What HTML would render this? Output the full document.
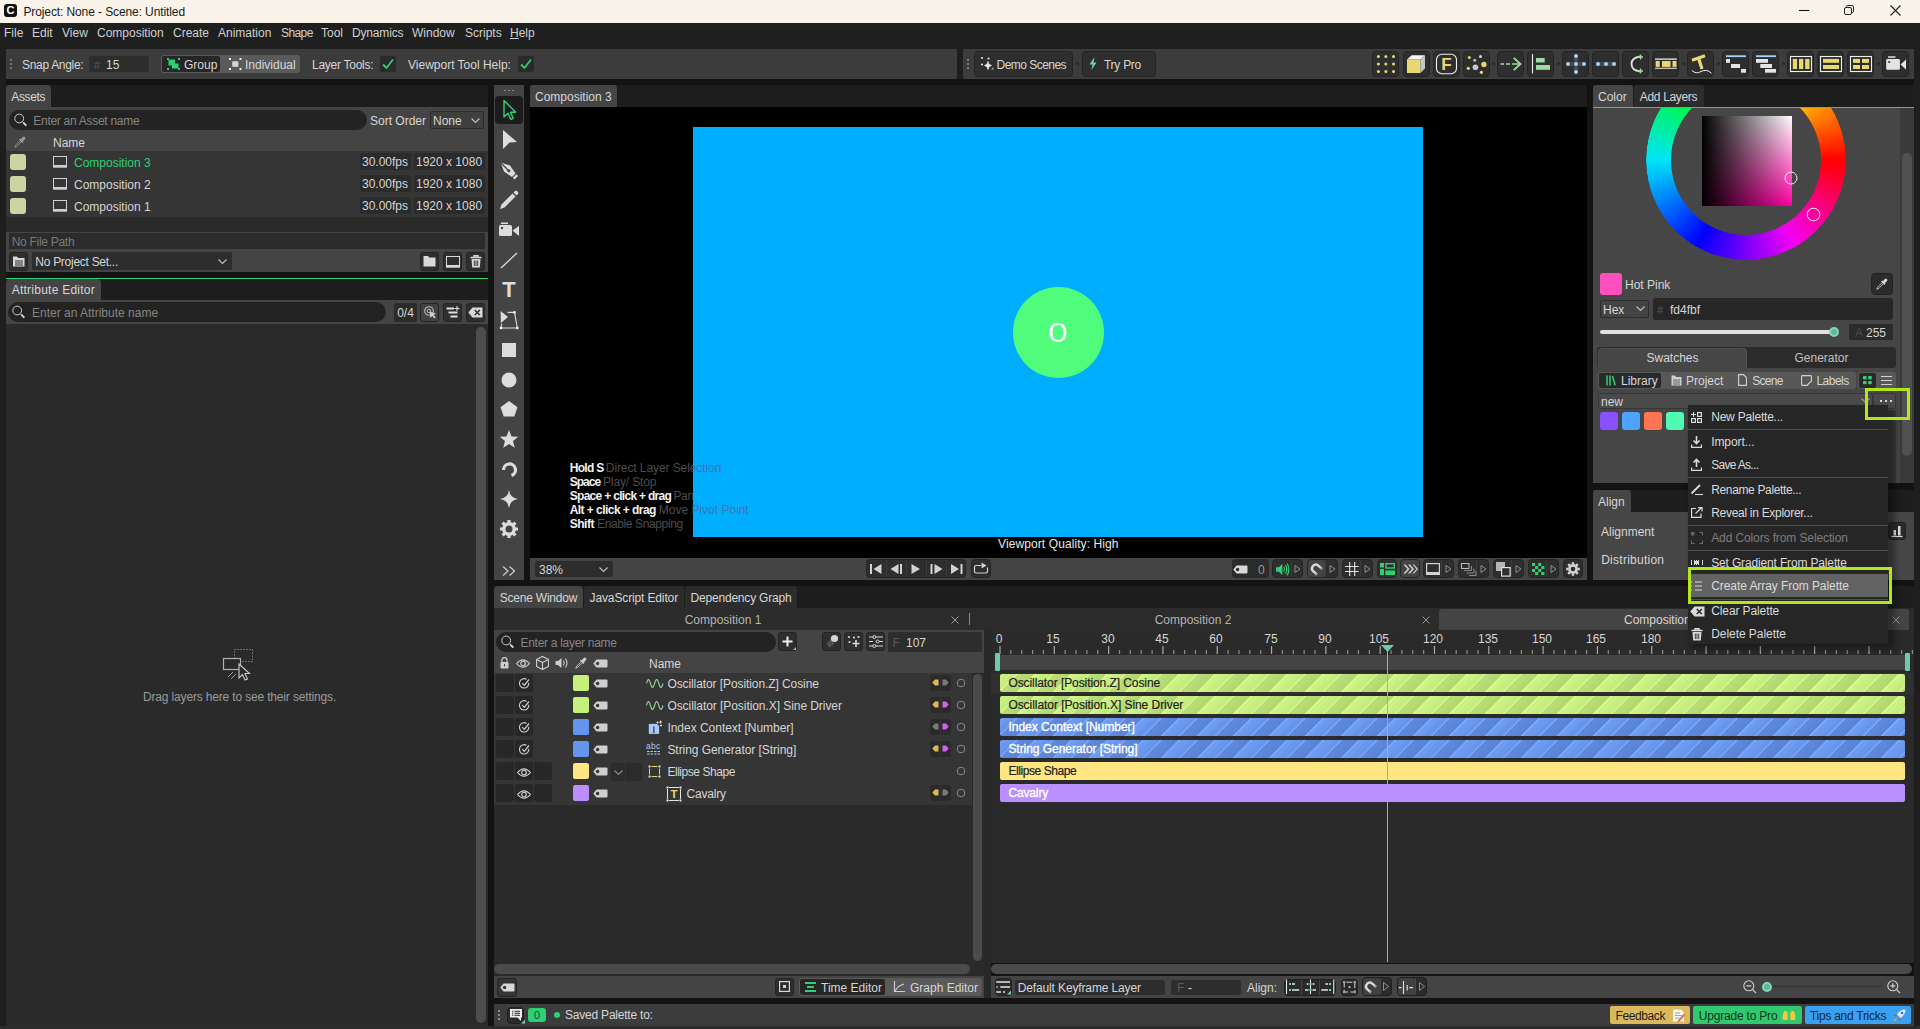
<!DOCTYPE html>
<html><head><meta charset="utf-8"><title>Project: None - Scene: Untitled</title>
<style>
html,body{margin:0;padding:0;background:#1e1e1e;}
body{width:1920px;height:1029px;overflow:hidden;font-family:"Liberation Sans",sans-serif;font-size:12px;color:#d4d4d4;}
#app{position:relative;width:1920px;height:1029px;overflow:hidden;background:#1e1e1e;}
#app div,#app svg{position:absolute;box-sizing:border-box;}
#app svg{overflow:visible;}
.t{white-space:nowrap;}
#app .t span{position:static;}

</style></head>
<body>
<div id="app">
<div style="left:0px;top:0px;width:1920px;height:23px;background:#f9f3ea;"></div>
<div style="left:4px;top:4px;width:13px;height:13px;background:#111;border-radius:3px;"></div>
<div class="t" style="left:4px;top:4px;height:13px;line-height:13px;font-size:11px;color:#ffffff;width:13px;text-align:center;font-weight:bold;">C</div>
<div class="t" style="left:23.4px;top:4px;height:17px;line-height:17px;font-size:12px;color:#1a1a1a;letter-spacing:-0.102px;">Project: None - Scene: Untitled</div>
<svg style="left:1799px;top:5px;" width="11" height="11" viewBox="0 0 11 11"><path d="M0 5.500H10.300" stroke="#1a1a1a" stroke-width="1.100"/></svg>
<svg style="left:1844px;top:5px;" width="11" height="11" viewBox="0 0 11 11"><rect x="0.5" y="2.5" width="7" height="7" rx="1.5" fill="none" stroke="#222"/><path d="M2.5 2.5V1.8Q2.5 0.5 3.8 0.5H8.2Q9.5 0.5 9.5 1.8V6.2Q9.5 7.5 8.2 7.5H7.5" fill="none" stroke="#222"/></svg>
<svg style="left:1890px;top:5px;" width="11" height="11" viewBox="0 0 11 11"><path d="M0.5 0.5L10.5 10.5M10.5 0.5L0.5 10.5" stroke="#222" stroke-width="1.1"/></svg>
<div style="left:0px;top:23px;width:1920px;height:20px;background:#1f1f1f;"></div>
<div class="t" style="left:4px;top:25px;height:16px;line-height:16px;font-size:12px;color:#cfcfcf;">File</div>
<div class="t" style="left:32px;top:25px;height:16px;line-height:16px;font-size:12px;color:#cfcfcf;">Edit</div>
<div class="t" style="left:62px;top:25px;height:16px;line-height:16px;font-size:12px;color:#cfcfcf;">View</div>
<div class="t" style="left:97px;top:25px;height:16px;line-height:16px;font-size:12px;color:#cfcfcf;">Composition</div>
<div class="t" style="left:173px;top:25px;height:16px;line-height:16px;font-size:12px;color:#cfcfcf;">Create</div>
<div class="t" style="left:218px;top:25px;height:16px;line-height:16px;font-size:12px;color:#cfcfcf;">Animation</div>
<div class="t" style="left:281px;top:25px;height:16px;line-height:16px;font-size:12px;color:#cfcfcf;letter-spacing:-0.600px;">Shape</div>
<div class="t" style="left:321px;top:25px;height:16px;line-height:16px;font-size:12px;color:#cfcfcf;">Tool</div>
<div class="t" style="left:352px;top:25px;height:16px;line-height:16px;font-size:12px;color:#cfcfcf;letter-spacing:-0.172px;">Dynamics</div>
<div class="t" style="left:412px;top:25px;height:16px;line-height:16px;font-size:12px;color:#cfcfcf;">Window</div>
<div class="t" style="left:465px;top:25px;height:16px;line-height:16px;font-size:12px;color:#cfcfcf;">Scripts</div>
<div class="t" style="left:510px;top:25px;height:16px;line-height:16px;font-size:12px;color:#cfcfcf;"><span style="text-decoration:underline">H</span>elp</div>
<div style="left:6px;top:49px;width:951px;height:30px;background:#3c3c3c;"></div>
<div style="left:10px;top:59px;width:2px;height:2px;background:#888;border-radius:1px;"></div>
<div style="left:10px;top:63px;width:2px;height:2px;background:#888;border-radius:1px;"></div>
<div style="left:10px;top:67px;width:2px;height:2px;background:#888;border-radius:1px;"></div>
<div class="t" style="left:22px;top:57px;height:16px;line-height:16px;font-size:12px;color:#d6d6d6;letter-spacing:-0.311px;">Snap Angle:</div>
<div style="left:89px;top:56px;width:60px;height:16px;background:#2d2d2d;border-radius:2px;"></div>
<div class="t" style="left:94px;top:57px;height:16px;line-height:16px;font-size:11px;color:#5c5c5c;">#</div>
<div class="t" style="left:106px;top:57px;height:16px;line-height:16px;font-size:12px;color:#d6d6d6;">15</div>
<div style="left:161px;top:55px;width:139px;height:18px;background:#5a5a5a;border-radius:3px;"></div>
<div style="left:162px;top:56px;width:58px;height:16px;background:#262626;border-radius:2px;"></div>
<div class="t" style="left:184px;top:57px;height:16px;line-height:16px;font-size:12px;color:#d6d6d6;">Group</div>
<div class="t" style="left:245px;top:57px;height:16px;line-height:16px;font-size:12px;color:#d6d6d6;">Individual</div>
<div class="t" style="left:312px;top:57px;height:16px;line-height:16px;font-size:12px;color:#d6d6d6;letter-spacing:-0.265px;">Layer Tools:</div>
<div style="left:380px;top:56px;width:16px;height:16px;background:#2a2a2a;border-radius:2px;"></div>
<svg style="left:380px;top:56px;" width="16" height="16" viewBox="0 0 16 16"><path d="M3 8.5L6.5 12L13 3.5" fill="none" stroke="#2fd072" stroke-width="1.8"/></svg>
<div class="t" style="left:408px;top:57px;height:16px;line-height:16px;font-size:12px;color:#d6d6d6;">Viewport Tool Help:</div>
<div style="left:518px;top:56px;width:16px;height:16px;background:#2a2a2a;border-radius:2px;"></div>
<svg style="left:518px;top:56px;" width="16" height="16" viewBox="0 0 16 16"><path d="M3 8.5L6.5 12L13 3.5" fill="none" stroke="#2fd072" stroke-width="1.8"/></svg>
<div style="left:963px;top:49px;width:951px;height:30px;background:#3c3c3c;"></div>
<div style="left:967px;top:59px;width:2px;height:2px;background:#888;border-radius:1px;"></div>
<div style="left:967px;top:63px;width:2px;height:2px;background:#888;border-radius:1px;"></div>
<div style="left:967px;top:67px;width:2px;height:2px;background:#888;border-radius:1px;"></div>
<div style="left:974px;top:51px;width:99px;height:26px;background:#2e2e2e;border-radius:4px;border:1px solid #242424;"></div>
<div class="t" style="left:996.6px;top:57px;height:16px;line-height:16px;font-size:12px;color:#d6d6d6;letter-spacing:-0.543px;">Demo Scenes</div>
<div style="left:1082px;top:51px;width:74px;height:26px;background:#2e2e2e;border-radius:4px;border:1px solid #242424;"></div>
<div class="t" style="left:1104px;top:57px;height:16px;line-height:16px;font-size:12px;color:#d6d6d6;letter-spacing:-0.270px;">Try Pro</div>
<div style="left:1372px;top:51px;width:27px;height:26px;background:#2e2e2e;border-radius:4px;border:1px solid #242424;"></div>
<div style="left:1403px;top:51px;width:27px;height:26px;background:#2e2e2e;border-radius:4px;border:1px solid #242424;"></div>
<div style="left:1433px;top:51px;width:27px;height:26px;background:#2e2e2e;border-radius:4px;border:1px solid #242424;"></div>
<div style="left:1463px;top:51px;width:27px;height:26px;background:#2e2e2e;border-radius:4px;border:1px solid #242424;"></div>
<div style="left:1497px;top:51px;width:27px;height:26px;background:#2e2e2e;border-radius:4px;border:1px solid #242424;"></div>
<div style="left:1527px;top:51px;width:27px;height:26px;background:#2e2e2e;border-radius:4px;border:1px solid #242424;"></div>
<div style="left:1562px;top:51px;width:27px;height:26px;background:#2e2e2e;border-radius:4px;border:1px solid #242424;"></div>
<div style="left:1592px;top:51px;width:27px;height:26px;background:#2e2e2e;border-radius:4px;border:1px solid #242424;"></div>
<div style="left:1622px;top:51px;width:27px;height:26px;background:#2e2e2e;border-radius:4px;border:1px solid #242424;"></div>
<div style="left:1652px;top:51px;width:27px;height:26px;background:#2e2e2e;border-radius:4px;border:1px solid #242424;"></div>
<div style="left:1687px;top:51px;width:27px;height:26px;background:#2e2e2e;border-radius:4px;border:1px solid #242424;"></div>
<div style="left:1722px;top:51px;width:27px;height:26px;background:#2e2e2e;border-radius:4px;border:1px solid #242424;"></div>
<div style="left:1752px;top:51px;width:27px;height:26px;background:#2e2e2e;border-radius:4px;border:1px solid #242424;"></div>
<div style="left:1787px;top:51px;width:27px;height:26px;background:#2e2e2e;border-radius:4px;border:1px solid #242424;"></div>
<div style="left:1817px;top:51px;width:27px;height:26px;background:#2e2e2e;border-radius:4px;border:1px solid #242424;"></div>
<div style="left:1847px;top:51px;width:27px;height:26px;background:#2e2e2e;border-radius:4px;border:1px solid #242424;"></div>
<div style="left:1882px;top:51px;width:27px;height:26px;background:#2e2e2e;border-radius:4px;border:1px solid #242424;"></div>
<div style="left:1492px;top:62px;width:3px;height:3px;background:#2a2a2a;border-radius:2px;"></div>
<div style="left:1557px;top:62px;width:3px;height:3px;background:#2a2a2a;border-radius:2px;"></div>
<div style="left:1682px;top:62px;width:3px;height:3px;background:#2a2a2a;border-radius:2px;"></div>
<div style="left:1717px;top:62px;width:3px;height:3px;background:#2a2a2a;border-radius:2px;"></div>
<div style="left:1782px;top:62px;width:3px;height:3px;background:#2a2a2a;border-radius:2px;"></div>
<div style="left:1877px;top:62px;width:3px;height:3px;background:#2a2a2a;border-radius:2px;"></div>
<div style="left:1076px;top:62px;width:3px;height:3px;background:#2a2a2a;border-radius:2px;"></div>
<div style="left:6px;top:79px;width:1908px;height:947px;background:#131313;"></div>
<div style="left:6px;top:85px;width:482px;height:22px;background:#1d1d1d;"></div>
<div style="left:6px;top:279px;width:482px;height:21px;background:#1d1d1d;"></div>
<div style="left:530px;top:85px;width:1057px;height:22px;background:#1d1d1d;"></div>
<div style="left:1593px;top:85px;width:321px;height:22px;background:#1d1d1d;"></div>
<div style="left:1593px;top:490px;width:321px;height:22px;background:#1d1d1d;"></div>
<div style="left:494px;top:586px;width:1420px;height:22px;background:#1d1d1d;"></div>
<div style="left:6px;top:85px;width:45px;height:22px;background:#444444;border-radius:4px 4px 0 0;"></div>
<div class="t" style="left:11.3px;top:89px;height:16px;line-height:16px;font-size:12px;color:#d6d6d6;letter-spacing:-0.385px;">Assets</div>
<div style="left:6px;top:107px;width:482px;height:165px;background:#444444;"></div>
<div style="left:9px;top:110px;width:358px;height:20px;background:#232323;border-radius:10px;"></div>
<svg style="left:14px;top:113px;" width="14" height="14" viewBox="0 0 14 14"><circle cx="5.200" cy="5.500" r="4.400" fill="none" stroke="#cfcfcf" stroke-width="1"/><path d="M8.500 8.800L10 10.300" stroke="#cfcfcf" stroke-width="1"/><path d="M10 10.300L11.800 12.100" stroke="#cfcfcf" stroke-width="2" stroke-linecap="round"/></svg>
<div class="t" style="left:33.3px;top:113px;height:16px;line-height:16px;font-size:12px;color:#858585;letter-spacing:-0.284px;">Enter an Asset name</div>
<div class="t" style="left:370px;top:113px;height:16px;line-height:16px;font-size:12px;color:#d6d6d6;">Sort Order</div>
<div style="left:430px;top:111px;width:54px;height:18px;background:#3f3f3f;border-radius:2px;border:1px solid #2c2c2c;"></div>
<div class="t" style="left:433px;top:113px;height:16px;line-height:16px;font-size:12px;color:#d6d6d6;">None</div>
<svg style="left:471px;top:118px;" width="9" height="6" viewBox="0 0 9 6"><path d="M0.5 0.5L4.5 4.5L8.5 0.5" fill="none" stroke="#bdbdbd" stroke-width="1.2"/></svg>
<svg style="left:14px;top:136px;" width="12" height="12" viewBox="0 0 12 12"><path d="M0.800 11.200L1.600 9.200L6.600 4.200L7.800 5.400L2.800 10.400Z" fill="none" stroke="#9a9a9a" stroke-width="0.900"/><path d="M5.600 3L9 6.400" stroke="#9a9a9a" stroke-width="1.700"/><path d="M7.800 4.200L9.900 2.100" stroke="#9a9a9a" stroke-width="3" stroke-linecap="round"/></svg>
<div class="t" style="left:53px;top:135px;height:16px;line-height:16px;font-size:12px;color:#d6d6d6;">Name</div>
<div style="left:6px;top:151px;width:482px;height:66px;background:#353535;"></div>
<div style="left:10px;top:154px;width:16px;height:16px;background:#ccd4a4;border-radius:3px;"></div>
<svg style="left:53px;top:156px;" width="14" height="12" viewBox="0 0 14 12"><rect x="0.5" y="0.5" width="13" height="9" fill="none" stroke="#d0d0d0" stroke-width="1"/><rect x="0" y="9.5" width="14" height="2.2" fill="#d0d0d0"/></svg>
<div class="t" style="left:74px;top:155px;height:16px;line-height:16px;font-size:12px;color:#2fd072;">Composition 3</div>
<div style="left:360px;top:153px;width:51px;height:17px;background:#2b2b2b;border-radius:2px;"></div>
<div class="t" style="left:362px;top:154px;height:16px;line-height:16px;font-size:12px;color:#d6d6d6;">30.00fps</div>
<div style="left:414px;top:153px;width:71px;height:17px;background:#2b2b2b;border-radius:2px;"></div>
<div class="t" style="left:416px;top:154px;height:16px;line-height:16px;font-size:12px;color:#d6d6d6;">1920 x 1080</div>
<div style="left:10px;top:176px;width:16px;height:16px;background:#ccd4a4;border-radius:3px;"></div>
<svg style="left:53px;top:178px;" width="14" height="12" viewBox="0 0 14 12"><rect x="0.5" y="0.5" width="13" height="9" fill="none" stroke="#d0d0d0" stroke-width="1"/><rect x="0" y="9.5" width="14" height="2.2" fill="#d0d0d0"/></svg>
<div class="t" style="left:74px;top:177px;height:16px;line-height:16px;font-size:12px;color:#d6d6d6;">Composition 2</div>
<div style="left:360px;top:175px;width:51px;height:17px;background:#2b2b2b;border-radius:2px;"></div>
<div class="t" style="left:362px;top:176px;height:16px;line-height:16px;font-size:12px;color:#d6d6d6;">30.00fps</div>
<div style="left:414px;top:175px;width:71px;height:17px;background:#2b2b2b;border-radius:2px;"></div>
<div class="t" style="left:416px;top:176px;height:16px;line-height:16px;font-size:12px;color:#d6d6d6;">1920 x 1080</div>
<div style="left:10px;top:198px;width:16px;height:16px;background:#ccd4a4;border-radius:3px;"></div>
<svg style="left:53px;top:200px;" width="14" height="12" viewBox="0 0 14 12"><rect x="0.5" y="0.5" width="13" height="9" fill="none" stroke="#d0d0d0" stroke-width="1"/><rect x="0" y="9.5" width="14" height="2.2" fill="#d0d0d0"/></svg>
<div class="t" style="left:74px;top:199px;height:16px;line-height:16px;font-size:12px;color:#d6d6d6;">Composition 1</div>
<div style="left:360px;top:197px;width:51px;height:17px;background:#2b2b2b;border-radius:2px;"></div>
<div class="t" style="left:362px;top:198px;height:16px;line-height:16px;font-size:12px;color:#d6d6d6;">30.00fps</div>
<div style="left:414px;top:197px;width:71px;height:17px;background:#2b2b2b;border-radius:2px;"></div>
<div class="t" style="left:416px;top:198px;height:16px;line-height:16px;font-size:12px;color:#d6d6d6;">1920 x 1080</div>
<div style="left:6px;top:217px;width:482px;height:15px;background:#2a2a2a;"></div>
<div style="left:9px;top:233px;width:476px;height:16px;background:#2b2b2b;"></div>
<div class="t" style="left:11.7px;top:234px;height:16px;line-height:16px;font-size:12px;color:#7a7a7a;letter-spacing:-0.286px;">No File Path</div>
<div style="left:9px;top:252px;width:19px;height:19px;background:#2e2e2e;border-radius:3px;border:1px solid #242424;"></div>
<svg style="left:12px;top:255px;" width="14" height="13" viewBox="0 0 14 13"><path d="M1 1.5H5L6 3H12.5V11.5H1Z" fill="#d8d8d8"/><path d="M3 6H11M3 8H11M3 10H11" stroke="#2e2e2e" stroke-width="1"/></svg>
<div style="left:32px;top:252px;width:200px;height:18px;background:#2d2d2d;border-radius:2px;"></div>
<div class="t" style="left:35.3px;top:254px;height:16px;line-height:16px;font-size:12px;color:#d6d6d6;letter-spacing:-0.275px;">No Project Set...</div>
<svg style="left:218px;top:259px;" width="9" height="6" viewBox="0 0 9 6"><path d="M0.5 0.5L4.5 4.5L8.5 0.5" fill="none" stroke="#bdbdbd" stroke-width="1.2"/></svg>
<div style="left:420px;top:252px;width:19px;height:19px;background:#2e2e2e;border-radius:3px;border:1px solid #242424;"></div>
<svg style="left:423px;top:255px;" width="13" height="12" viewBox="0 0 13 12"><path d="M0.5 1H5L6.2 2.5H12.5V11.5H0.5Z" fill="#d8d8d8"/></svg>
<div style="left:443px;top:252px;width:19px;height:19px;background:#2e2e2e;border-radius:3px;border:1px solid #242424;"></div>
<svg style="left:446px;top:256px;" width="14" height="12" viewBox="0 0 14 12"><rect x="0.5" y="0.5" width="13" height="9" fill="none" stroke="#d8d8d8" stroke-width="1"/><rect x="0" y="9.5" width="14" height="2.2" fill="#d8d8d8"/></svg>
<div style="left:466px;top:252px;width:19px;height:19px;background:#2e2e2e;border-radius:3px;border:1px solid #242424;"></div>
<svg style="left:470px;top:255px;" width="12" height="13" viewBox="0 0 12 13"><path d="M0.5 2.5H11.5M4 2V0.7H8V2" stroke="#d8d8d8" stroke-width="1.4" fill="none"/><path d="M1.5 4H10.5L9.8 12.5H2.2Z" fill="#d8d8d8"/><path d="M4.3 5.5V11M6 5.5V11M7.7 5.5V11" stroke="#2e2e2e" stroke-width="0.9"/></svg>
<div style="left:6px;top:278px;width:482px;height:1px;background:#2fd072;"></div>
<div style="left:6px;top:279px;width:95px;height:21px;background:#444444;border-radius:4px 4px 0 0;"></div>
<div class="t" style="left:11.7px;top:282px;height:16px;line-height:16px;font-size:12px;color:#d6d6d6;letter-spacing:0.245px;">Attribute Editor</div>
<div style="left:6px;top:300px;width:482px;height:24px;background:#444444;"></div>
<div style="left:8px;top:302px;width:378px;height:20px;background:#232323;border-radius:10px;"></div>
<svg style="left:12px;top:305px;" width="14" height="14" viewBox="0 0 14 14"><circle cx="5.200" cy="5.500" r="4.400" fill="none" stroke="#cfcfcf" stroke-width="1"/><path d="M8.500 8.800L10 10.300" stroke="#cfcfcf" stroke-width="1"/><path d="M10 10.300L11.800 12.100" stroke="#cfcfcf" stroke-width="2" stroke-linecap="round"/></svg>
<div class="t" style="left:32px;top:305px;height:16px;line-height:16px;font-size:12px;color:#858585;">Enter an Attribute name</div>
<div style="left:394px;top:303px;width:23px;height:19px;background:#2b2b2b;border-radius:2px;"></div>
<div class="t" style="left:394px;top:305px;height:16px;line-height:16px;font-size:12px;color:#d6d6d6;width:23px;text-align:center;">0/4</div>
<div style="left:420px;top:303px;width:19px;height:19px;background:#424242;border-radius:3px;border:1px solid #242424;"></div>
<div style="left:443px;top:303px;width:19px;height:19px;background:#2e2e2e;border-radius:3px;border:1px solid #242424;"></div>
<div style="left:466px;top:303px;width:19px;height:19px;background:#2e2e2e;border-radius:3px;border:1px solid #242424;"></div>
<svg style="left:424px;top:306px;" width="13" height="13" viewBox="0 0 13 13"><circle cx="5" cy="5" r="4.300" fill="none" stroke="#b8b8b8" stroke-width="1.100"/><circle cx="5" cy="5" r="1.800" fill="none" stroke="#b8b8b8" stroke-width="1"/><path d="M5.500 5.500L6.500 12L8.300 10L10.500 12.500L11.800 11.300L9.600 9L12 7.500Z" fill="#d0d0d0"/></svg>
<svg style="left:446px;top:306px;" width="14" height="12" viewBox="0 0 14 12"><path d="M0.500 2.500H8M2.500 6.500H11.500M4.500 10.500H11.500" stroke="#e0e0e0" stroke-width="1.800"/><path d="M11 0V5M8.500 2.500H13.500" stroke="#e0e0e0" stroke-width="1.100"/></svg>
<svg style="left:468px;top:307px;" width="15" height="11" viewBox="0 0 15 11"><path d="M0.3 5.5L4.5 0.5H14.5V10.5H4.5Z" fill="#d8d8d8"/><path d="M6.8 3L11.8 8M11.8 3L6.8 8" stroke="#2e2e2e" stroke-width="1.5"/></svg>
<div style="left:6px;top:324px;width:482px;height:702px;background:#2a2a2a;"></div>
<div style="left:476px;top:327px;width:10px;height:696px;background:#4d4d4d;border-radius:5px;"></div>
<div class="t" style="left:143px;top:689px;height:16px;line-height:16px;font-size:12px;color:#9a9a9a;letter-spacing:-0.162px;">Drag layers here to see their settings.</div>
<svg style="left:222px;top:648px;" width="32" height="34" viewBox="0 0 32 34"><rect x="12.5" y="1.5" width="18" height="12" fill="none" stroke="#9a9a9a" stroke-dasharray="1.2 1.8"/><rect x="1.5" y="10.5" width="17" height="11" fill="#2a2a2a" stroke="#b0b0b0" stroke-width="1.2"/><path d="M17 16L17 30L20.5 26.5L23 32L25.5 31L23 25.5L27.5 25.5Z" fill="#2a2a2a" stroke="#c8c8c8" stroke-width="1.1"/><path d="M6 29L11 24M9 31L14 26" stroke="#9a9a9a" stroke-width="1"/></svg>
<div style="left:494px;top:85px;width:30px;height:495px;background:#444444;"></div>
<div style="left:504px;top:90px;width:2px;height:1px;background:#8a8a8a;"></div>
<div style="left:508px;top:90px;width:2px;height:1px;background:#8a8a8a;"></div>
<div style="left:512px;top:90px;width:2px;height:1px;background:#8a8a8a;"></div>
<div style="left:495px;top:96px;width:28px;height:28px;background:#1c1c1c;border-radius:4px;"></div>
<svg style="left:497px;top:98px;" width="24" height="24" viewBox="0 0 24 24"><path d="M7 2.5L7 19L11 15.2L13.8 21.5L16.2 20.4L13.5 14.3L18.8 14.3Z" fill="none" stroke="#2fd072" stroke-width="1.4" stroke-linejoin="round"/></svg>
<svg style="left:497px;top:128px;" width="24" height="24" viewBox="0 0 24 24"><path d="M6 2L20 14L12.5 14.5L6 21Z" fill="#dcdcdc"/></svg>
<svg style="left:497px;top:158px;" width="24" height="24" viewBox="0 0 24 24"><path d="M3.5 4.5L13 7.5L18.5 15.5L15 19L7 13.5Z" fill="#dcdcdc"/><path d="M3.5 4.5L11.5 12.5" stroke="#444" stroke-width="1.2"/><circle cx="11.8" cy="12.8" r="1.5" fill="#444"/><path d="M15.8 19.8L19.3 16.3L21 18L17.5 21.5Z" fill="#dcdcdc"/></svg>
<svg style="left:497px;top:188px;" width="24" height="24" viewBox="0 0 24 24"><path d="M3 21L4.5 16.5L15.5 5.5L18.5 8.5L7.5 19.5Z" fill="#dcdcdc"/><path d="M16.5 4.5L18 3Q19 2.2 20 3L21 4Q21.8 5 21 6L19.5 7.5Z" fill="#dcdcdc"/></svg>
<svg style="left:497px;top:216.5px;" width="24" height="24" viewBox="0 0 24 24"><rect x="2" y="8" width="13" height="11" rx="1.500" fill="#dcdcdc"/><path d="M15.500 13.500L22 9V19Z" fill="#dcdcdc"/><rect x="4" y="5.500" width="7" height="1.600" fill="#dcdcdc"/><circle cx="5" cy="11" r="1.200" fill="#444"/></svg>
<svg style="left:497px;top:248px;" width="24" height="24" viewBox="0 0 24 24"><path d="M4 20L20 5" stroke="#dcdcdc" stroke-width="1.3"/></svg>
<div class="t" style="left:497px;top:278px;height:24px;line-height:24px;font-size:22px;color:#dcdcdc;width:24px;text-align:center;font-weight:bold;">T</div>
<svg style="left:497px;top:308px;" width="24" height="24" viewBox="0 0 24 24"><path d="M3.600 2.900L11 9L3.900 14.900Z" fill="#dcdcdc"/><path d="M10.500 4.400H17.500L20.300 20H4L4.800 15.500" fill="none" stroke="#dcdcdc" stroke-width="1.100"/><rect x="16.300" y="3.200" width="2.400" height="2.400" fill="#f0f0f0"/><rect x="19.100" y="18.800" width="2.400" height="2.400" fill="#f0f0f0"/><rect x="2.800" y="18.800" width="2.400" height="2.400" fill="#f0f0f0"/></svg>
<svg style="left:497px;top:338px;" width="24" height="24" viewBox="0 0 24 24"><rect x="5" y="5" width="14" height="14" fill="#dcdcdc"/></svg>
<svg style="left:497px;top:368px;" width="24" height="24" viewBox="0 0 24 24"><circle cx="12" cy="12" r="7.5" fill="#dcdcdc"/></svg>
<svg style="left:497px;top:397px;" width="24" height="24" viewBox="0 0 24 24"><path d="M12 4L20.5 10.2L17.3 19.5H6.7L3.500 10.2Z" fill="#dcdcdc"/></svg>
<svg style="left:497px;top:427px;" width="24" height="24" viewBox="0 0 24 24"><path d="M12 3L14.5 9.4L21.3 9.8L16 14.1L17.8 20.7L12 17L6.200 20.7L8 14.1L2.700 9.800L9.500 9.400Z" fill="#dcdcdc"/></svg>
<svg style="left:497px;top:457px;" width="24" height="24" viewBox="0 0 24 24"><path d="M6.5 13A6 6 0 1 1 14.5 18.6" fill="none" stroke="#dcdcdc" stroke-width="3.2"/></svg>
<svg style="left:497px;top:487px;" width="24" height="24" viewBox="0 0 24 24"><path d="M12 3Q13 11 21 12Q13 13 12 21Q11 13 3 12Q11 11 12 3Z" fill="#dcdcdc"/></svg>
<svg style="left:497px;top:517px;" width="24" height="24" viewBox="0 0 24 24"><circle cx="12" cy="12" r="5.2" fill="none" stroke="#dcdcdc" stroke-width="3.4"/><g stroke="#dcdcdc" stroke-width="3.2"><path d="M12 3V6M12 18V21M3 12H6M18 12H21M5.6 5.6L7.8 7.8M16.2 16.2L18.4 18.4M5.6 18.4L7.8 16.2M16.2 7.8L18.4 5.6"/></g></svg>
<svg style="left:502px;top:565px;" width="14" height="12" viewBox="0 0 14 12"><path d="M1 1.5L6 6L1 10.5M7.5 1.500L12.5 6L7.5 10.5" fill="none" stroke="#c8c8c8" stroke-width="1.3"/></svg>
<div style="left:530px;top:85px;width:87px;height:22px;background:#444444;border-radius:3px 3px 0 0;"></div>
<div class="t" style="left:535px;top:89px;height:16px;line-height:16px;font-size:12px;color:#d6d6d6;">Composition 3</div>
<div style="left:530px;top:107px;width:1057px;height:451px;background:#000;"></div>
<div style="left:693px;top:127px;width:730px;height:410px;background:#00aeff;"></div>
<div style="left:1012.5px;top:286.5px;width:91px;height:91px;background:#50fc7b;border-radius:46px;"></div>
<div class="t" style="left:1013px;top:318px;height:30px;line-height:30px;font-size:27px;color:#fff;width:90px;text-align:center;transform:scaleX(1.32);transform-origin:50% 50%;">0</div>
<div style="left:530px;top:440px;width:163px;height:100px;overflow:hidden;"><div style="left:-530px;top:-440px;width:1920px;height:1029px;">
<div class="t" style="left:569.7px;top:460px;height:16px;line-height:16px;font-size:12px;color:#f2f2f2;letter-spacing:-0.700px;font-weight:bold;">Hold S</div>
<div class="t" style="left:605.8px;top:460px;height:16px;line-height:16px;font-size:12px;color:#4c4c4c;letter-spacing:-0.086px;">Direct Layer Selection</div>
<div class="t" style="left:569.7px;top:474px;height:16px;line-height:16px;font-size:12px;color:#f2f2f2;letter-spacing:-0.971px;font-weight:bold;">Space</div>
<div class="t" style="left:603px;top:474px;height:16px;line-height:16px;font-size:12px;color:#4c4c4c;letter-spacing:-0.140px;">Play/ Stop</div>
<div class="t" style="left:569.7px;top:488px;height:16px;line-height:16px;font-size:12px;color:#f2f2f2;letter-spacing:-0.695px;font-weight:bold;">Space + click + drag</div>
<div class="t" style="left:673.4px;top:488px;height:16px;line-height:16px;font-size:12px;color:#4c4c4c;letter-spacing:-0.317px;">Pan</div>
<div class="t" style="left:569.7px;top:502px;height:16px;line-height:16px;font-size:12px;color:#f2f2f2;letter-spacing:-0.547px;font-weight:bold;">Alt + click + drag</div>
<div class="t" style="left:658.8px;top:502px;height:16px;line-height:16px;font-size:12px;color:#4c4c4c;letter-spacing:-0.003px;">Move Pivot Point</div>
<div class="t" style="left:569.7px;top:516px;height:16px;line-height:16px;font-size:12px;color:#f2f2f2;letter-spacing:-0.473px;font-weight:bold;">Shift</div>
<div class="t" style="left:597px;top:516px;height:16px;line-height:16px;font-size:12px;color:#4c4c4c;letter-spacing:-0.374px;">Enable Snapping</div>
</div></div>
<div style="left:693px;top:440px;width:200px;height:100px;overflow:hidden;"><div style="left:-693px;top:-440px;width:1920px;height:1029px;">
<div class="t" style="left:569.7px;top:460px;height:16px;line-height:16px;font-size:12px;color:#f2f2f2;letter-spacing:-0.700px;font-weight:bold;">Hold S</div>
<div class="t" style="left:605.8px;top:460px;height:16px;line-height:16px;font-size:12px;color:#4d6fb4;letter-spacing:-0.086px;">Direct Layer Selection</div>
<div class="t" style="left:569.7px;top:474px;height:16px;line-height:16px;font-size:12px;color:#f2f2f2;letter-spacing:-0.971px;font-weight:bold;">Space</div>
<div class="t" style="left:603px;top:474px;height:16px;line-height:16px;font-size:12px;color:#4d6fb4;letter-spacing:-0.140px;">Play/ Stop</div>
<div class="t" style="left:569.7px;top:488px;height:16px;line-height:16px;font-size:12px;color:#f2f2f2;letter-spacing:-0.695px;font-weight:bold;">Space + click + drag</div>
<div class="t" style="left:673.4px;top:488px;height:16px;line-height:16px;font-size:12px;color:#4d6fb4;letter-spacing:-0.317px;">Pan</div>
<div class="t" style="left:569.7px;top:502px;height:16px;line-height:16px;font-size:12px;color:#f2f2f2;letter-spacing:-0.547px;font-weight:bold;">Alt + click + drag</div>
<div class="t" style="left:658.8px;top:502px;height:16px;line-height:16px;font-size:12px;color:#4d6fb4;letter-spacing:-0.003px;">Move Pivot Point</div>
<div class="t" style="left:569.7px;top:516px;height:16px;line-height:16px;font-size:12px;color:#f2f2f2;letter-spacing:-0.473px;font-weight:bold;">Shift</div>
<div class="t" style="left:597px;top:516px;height:16px;line-height:16px;font-size:12px;color:#4d6fb4;letter-spacing:-0.374px;">Enable Snapping</div>
</div></div>
<div class="t" style="left:998.1px;top:536px;height:16px;line-height:16px;font-size:12px;color:#e8e8e8;letter-spacing:0.091px;">Viewport Quality: High</div>
<div style="left:530px;top:558px;width:1057px;height:22px;background:#444444;"></div>
<div style="left:535px;top:561px;width:78px;height:16px;background:#2d2d2d;border-radius:2px;"></div>
<div class="t" style="left:539px;top:562px;height:16px;line-height:16px;font-size:12px;color:#d6d6d6;">38%</div>
<svg style="left:599px;top:567px;" width="9" height="6" viewBox="0 0 9 6"><path d="M0.5 0.5L4.5 4.5L8.5 0.5" fill="none" stroke="#bdbdbd" stroke-width="1.2"/></svg>
<div style="left:866px;top:559px;width:100px;height:19px;background:#2e2e2e;border-radius:4px;border:1px solid #262626;"></div>
<div style="left:886px;top:560px;width:1px;height:17px;background:#3a3a3a;"></div>
<div style="left:906px;top:560px;width:1px;height:17px;background:#3a3a3a;"></div>
<div style="left:926px;top:560px;width:1px;height:17px;background:#3a3a3a;"></div>
<div style="left:946px;top:560px;width:1px;height:17px;background:#3a3a3a;"></div>
<svg style="left:867px;top:559px;" width="20" height="19" viewBox="0 0 20 19"><rect x="3" y="5" width="2" height="10" fill="#d2d2d2"/><path d="M14.5 5V15L6.500 10Z" fill="#d2d2d2"/></svg>
<svg style="left:887px;top:559px;" width="20" height="19" viewBox="0 0 20 19"><path d="M11.5 5V15L3.500 10Z" fill="#d2d2d2"/><rect x="13" y="5" width="2" height="10" fill="#d2d2d2"/></svg>
<svg style="left:907px;top:559px;" width="20" height="19" viewBox="0 0 20 19"><path d="M4.5 5V15L13 10Z" fill="#d2d2d2"/></svg>
<svg style="left:927px;top:559px;" width="20" height="19" viewBox="0 0 20 19"><rect x="3.5" y="5" width="2" height="10" fill="#d2d2d2"/><path d="M7.5 5V15L15.5 10Z" fill="#d2d2d2"/></svg>
<svg style="left:947px;top:559px;" width="20" height="19" viewBox="0 0 20 19"><path d="M4 5V15L12 10Z" fill="#d2d2d2"/><rect x="13.5" y="5" width="2" height="10" fill="#d2d2d2"/></svg>
<div style="left:971px;top:559px;width:20px;height:19px;background:#2e2e2e;border-radius:4px;border:1px solid #262626;"></div>
<svg style="left:971px;top:559px;" width="20" height="19" viewBox="0 0 20 19"><path d="M10 6.500H5Q3.500 6.500 3.500 8V12.500Q3.500 14 5 14H15Q16.500 14 16.500 12.500V8.500" fill="none" stroke="#d2d2d2" stroke-width="1.2"/><path d="M10.5 3.500L15.500 6.500L10.500 9.500Z" fill="#d2d2d2"/></svg>
<div style="left:1232px;top:559.4px;width:37px;height:19px;background:#2b2b2b;border-radius:3px;"></div>
<svg style="left:1233px;top:564.5px;" width="15" height="9" viewBox="0 0 15 9"><path d="M0.3 4.500L3.500 0.500H13.500Q14.500 0.500 14.500 1.500V7.500Q14.500 8.500 13.500 8.500H3.500Z" fill="#d8d8d8"/><circle cx="4.600" cy="4.500" r="1.700" fill="#2e2e2e"/></svg>
<div class="t" style="left:1258px;top:562px;height:16px;line-height:16px;font-size:12px;color:#9a9a9a;">0</div>
<div style="left:1272px;top:559.4px;width:31px;height:19px;background:#2e2e2e;border-radius:4px;border:1px solid #262626;"></div>
<div style="left:1291px;top:560.4px;width:1px;height:17px;background:#3c3c3c;"></div>
<svg style="left:1276px;top:563px;" width="14" height="13" viewBox="0 0 14 13"><path d="M0 4.300H2.800L6.300 1V12L2.800 8.700H0Z" fill="#2fd072"/><path d="M7.800 3.800Q9.200 6.500 7.800 9.200M9.500 2Q12 6.500 9.500 11M11.200 0.500Q14.500 6.500 11.200 12.500" fill="none" stroke="#2fd072" stroke-width="1.100"/></svg>
<svg style="left:1294px;top:564px;" width="7" height="10" viewBox="0 0 7 10"><path d="M1 1.5L6 5L1 8.500Z" fill="none" stroke="#8e8e8e" stroke-width="1"/></svg>
<div style="left:1307px;top:559.4px;width:31px;height:19px;background:#2e2e2e;border-radius:4px;border:1px solid #262626;"></div>
<div style="left:1325px;top:560.4px;width:1px;height:17px;background:#3c3c3c;"></div>
<div style="left:1308px;top:560.4px;width:17px;height:17px;background:#444;border-radius:3px;"></div>
<svg style="left:1310px;top:562px;" width="14" height="14" viewBox="0 0 14 14"><path d="M6.950 12.500L3.150 9.150A3.800 3.800 0 0 1 8.150 3.450L11.950 6.800" fill="none" stroke="#d8d8d8" stroke-width="2.400"/><path d="M5.700 11.400L6.950 12.500M10.700 5.700L11.950 6.800" fill="none" stroke="#9a9a9a" stroke-width="2.400"/></svg>
<svg style="left:1329px;top:564px;" width="7" height="10" viewBox="0 0 7 10"><path d="M1 1.5L6 5L1 8.500Z" fill="none" stroke="#8e8e8e" stroke-width="1"/></svg>
<div style="left:1342px;top:559.4px;width:31px;height:19px;background:#2e2e2e;border-radius:4px;border:1px solid #262626;"></div>
<div style="left:1360px;top:560.4px;width:1px;height:17px;background:#3c3c3c;"></div>
<svg style="left:1344px;top:562px;" width="15" height="15" viewBox="0 0 15 15"><path d="M5.700 0V14M10.700 0V14M1 4.500H14.700M1 9.500H14.700" stroke="#e4e4e4" stroke-width="1.100"/></svg>
<svg style="left:1364px;top:564px;" width="7" height="10" viewBox="0 0 7 10"><path d="M1 1.5L6 5L1 8.500Z" fill="none" stroke="#8e8e8e" stroke-width="1"/></svg>
<div style="left:1377px;top:559.4px;width:20px;height:19px;background:#2e2e2e;border-radius:4px;border:1px solid #262626;"></div>
<svg style="left:1380px;top:563px;" width="15" height="12" viewBox="0 0 15 12"><rect x="0" y="0" width="4" height="4.500" fill="#2fd072"/><rect x="0" y="6" width="4" height="6" fill="#2fd072"/><rect x="6" y="0.700" width="8.300" height="4.300" fill="none" stroke="#2fd072" stroke-width="1.400"/><rect x="5.300" y="7.500" width="9.700" height="4.500" fill="#2fd072"/></svg>
<div style="left:1400px;top:559.4px;width:20px;height:19px;background:#444;border-radius:4px;border:1px solid #262626;"></div>
<svg style="left:1403px;top:564px;" width="15" height="10" viewBox="0 0 15 10"><path d="M0.500 0.500L4.500 5L0.500 9.500H2.500L6.500 5L2.500 0.500Z M5 0.500L9 5L5 9.500H7L11 5L7 0.500Z M9.500 0.500L13.500 5L9.500 9.500H11L15 5L11 0.500Z" fill="#d2d2d2"/></svg>
<div style="left:1423px;top:559.4px;width:31px;height:19px;background:#2e2e2e;border-radius:4px;border:1px solid #262626;"></div>
<div style="left:1441px;top:560.4px;width:1px;height:17px;background:#3c3c3c;"></div>
<svg style="left:1426px;top:563px;" width="14" height="12" viewBox="0 0 14 12"><rect x="0.600" y="0.600" width="12.800" height="9" fill="none" stroke="#d2d2d2" stroke-width="1.200"/><rect x="0" y="9.500" width="14" height="2.500" fill="#d2d2d2"/></svg>
<svg style="left:1445px;top:564px;" width="7" height="10" viewBox="0 0 7 10"><path d="M1 1.5L6 5L1 8.500Z" fill="none" stroke="#8e8e8e" stroke-width="1"/></svg>
<div style="left:1458px;top:559.4px;width:31px;height:19px;background:#2e2e2e;border-radius:4px;border:1px solid #262626;"></div>
<div style="left:1476px;top:560.4px;width:1px;height:17px;background:#3c3c3c;"></div>
<svg style="left:1461px;top:563px;" width="14" height="13" viewBox="0 0 14 13"><rect x="0.500" y="0.500" width="7.500" height="5" fill="none" stroke="#bdbdbd"/><path d="M3 7.500H10.500V3M5.500 10H13V5.500M8 12.500H15V8" fill="none" stroke="#8a8a8a"/></svg>
<svg style="left:1480px;top:564px;" width="7" height="10" viewBox="0 0 7 10"><path d="M1 1.5L6 5L1 8.500Z" fill="none" stroke="#8e8e8e" stroke-width="1"/></svg>
<div style="left:1493px;top:559.4px;width:31px;height:19px;background:#2e2e2e;border-radius:4px;border:1px solid #262626;"></div>
<div style="left:1511px;top:560.4px;width:1px;height:17px;background:#3c3c3c;"></div>
<svg style="left:1496px;top:562px;" width="15" height="15" viewBox="0 0 15 15"><rect x="0" y="0" width="9" height="9" fill="#b4b4b4"/><rect x="5.600" y="5.600" width="8.500" height="8.500" fill="#2e2e2e" stroke="#e0e0e0" stroke-width="1.200"/></svg>
<svg style="left:1515px;top:564px;" width="7" height="10" viewBox="0 0 7 10"><path d="M1 1.5L6 5L1 8.500Z" fill="none" stroke="#8e8e8e" stroke-width="1"/></svg>
<div style="left:1528px;top:559.4px;width:31px;height:19px;background:#2e2e2e;border-radius:4px;border:1px solid #262626;"></div>
<div style="left:1546px;top:560.4px;width:1px;height:17px;background:#3c3c3c;"></div>
<svg style="left:1531.7px;top:563px;" width="13" height="12" viewBox="0 0 13 12"><rect x="0.0" y="0.0" width="3.100" height="3" fill="#2fd072"/><rect x="6.2" y="0.0" width="3.100" height="3" fill="#2fd072"/><rect x="3.1" y="3.0" width="3.100" height="3" fill="#2fd072"/><rect x="9.3" y="3.0" width="3.100" height="3" fill="#2fd072"/><rect x="0.0" y="6.0" width="3.100" height="3" fill="#2fd072"/><rect x="6.2" y="6.0" width="3.100" height="3" fill="#2fd072"/><rect x="3.1" y="9.0" width="3.100" height="3" fill="#2fd072"/><rect x="9.3" y="9.0" width="3.100" height="3" fill="#2fd072"/></svg>
<svg style="left:1550px;top:564px;" width="7" height="10" viewBox="0 0 7 10"><path d="M1 1.5L6 5L1 8.500Z" fill="none" stroke="#8e8e8e" stroke-width="1"/></svg>
<div style="left:1563px;top:559.4px;width:20px;height:19px;background:#2e2e2e;border-radius:4px;border:1px solid #262626;"></div>
<svg style="left:1565px;top:561px;" width="16" height="16" viewBox="0 0 16 16"><circle cx="8" cy="8" r="3.600" fill="none" stroke="#d2d2d2" stroke-width="2.600"/><g stroke="#d2d2d2" stroke-width="2.400"><path d="M8 1.200V3.500M8 12.500V14.800M1.200 8H3.500M12.500 8H14.800M3.200 3.200L4.800 4.800M11.200 11.200L12.800 12.800M3.200 12.800L4.800 11.200M11.200 4.800L12.800 3.200"/></g></svg>
<div style="left:1593px;top:85px;width:40px;height:22px;background:#464646;border-radius:3px 3px 0 0;"></div>
<div class="t" style="left:1598px;top:89px;height:16px;line-height:16px;font-size:12px;color:#d6d6d6;">Color</div>
<div style="left:1634px;top:85px;width:70px;height:22px;background:#2c2c2c;border-radius:3px 3px 0 0;"></div>
<div class="t" style="left:1639.8px;top:89px;height:16px;line-height:16px;font-size:12px;color:#d6d6d6;letter-spacing:-0.330px;">Add Layers</div>
<div style="left:1593px;top:107px;width:321px;height:1px;background:#2fd072;"></div>
<div style="left:1593px;top:108px;width:307px;height:375px;background:#464646;"></div>
<div style="left:1900px;top:108px;width:14px;height:375px;background:#3a3a3a;"></div>
<div style="left:1902px;top:153px;width:10px;height:303px;background:#515151;border-radius:5px;"></div>
<div style="left:1593px;top:108px;width:307px;height:160px;overflow:hidden;"><div style="left:52.5px;top:-48px;width:200px;height:200px;border-radius:50%;background:conic-gradient(from 90deg,#ff0000,#f400f4,#0000ff,#00e4f8,#00ff00,#ffff00,#ff0000);-webkit-mask:radial-gradient(circle,transparent 74.5px,#000 75.5px,#000 99.5px,transparent 100.5px);mask:radial-gradient(circle,transparent 74.5px,#000 75.5px,#000 99.5px,transparent 100.5px);"></div></div>
<div style="left:1702px;top:116px;width:90px;height:90px;background:linear-gradient(to right,#000,rgba(0,0,0,0)),linear-gradient(to bottom,#fff,#ff00a4);"></div>
<svg style="left:1784px;top:171px;" width="14" height="14" viewBox="0 0 14 14"><circle cx="7" cy="7" r="6" fill="none" stroke="#f0f0f0" stroke-width="1"/></svg>
<svg style="left:1806px;top:207px;" width="15" height="15" viewBox="0 0 15 15"><circle cx="7.500" cy="7.500" r="6.300" fill="none" stroke="#f0f0f0" stroke-width="1"/></svg>
<div style="left:1600px;top:273px;width:22px;height:22px;background:#fd4fbf;border-radius:3px;"></div>
<div class="t" style="left:1625px;top:277px;height:16px;line-height:16px;font-size:12px;color:#d6d6d6;">Hot Pink</div>
<div style="left:1871px;top:273px;width:22px;height:22px;background:#2b2b2b;border-radius:4px;border:1px solid #222;"></div>
<svg style="left:1876px;top:278px;" width="12" height="12" viewBox="0 0 12 12"><path d="M0.800 11.200L1.600 9.200L6.600 4.200L7.800 5.400L2.800 10.400Z" fill="none" stroke="#d0d0d0" stroke-width="0.900"/><path d="M5.600 3L9 6.400" stroke="#d0d0d0" stroke-width="1.700"/><path d="M7.800 4.200L9.900 2.100" stroke="#d0d0d0" stroke-width="3" stroke-linecap="round"/></svg>
<div style="left:1600px;top:300px;width:49px;height:18px;background:#444;border-radius:2px;border:1px solid #2c2c2c;"></div>
<div class="t" style="left:1603px;top:302px;height:16px;line-height:16px;font-size:12px;color:#d6d6d6;">Hex</div>
<svg style="left:1636px;top:306px;" width="9" height="6" viewBox="0 0 9 6"><path d="M0.5 0.5L4.5 4.5L8.5 0.5" fill="none" stroke="#bdbdbd" stroke-width="1.2"/></svg>
<div style="left:1653px;top:298px;width:240px;height:22px;background:#262626;border-radius:3px;"></div>
<div class="t" style="left:1657px;top:302px;height:16px;line-height:16px;font-size:11px;color:#5a5a5a;">#</div>
<div class="t" style="left:1670px;top:302px;height:16px;line-height:16px;font-size:12px;color:#d6d6d6;">fd4fbf</div>
<div style="left:1600px;top:330px;width:234px;height:4px;background:#e0e0e0;border-radius:2px;"></div>
<div style="left:1829px;top:327px;width:10px;height:10px;background:#5fb89c;border-radius:5px;border:2px solid #86d4bc;"></div>
<div style="left:1849px;top:324px;width:44px;height:16px;background:#2b2b2b;border-radius:2px;"></div>
<div class="t" style="left:1855px;top:325px;height:16px;line-height:16px;font-size:12px;color:#484848;">A</div>
<div class="t" style="left:1866px;top:325px;height:16px;line-height:16px;font-size:12px;color:#d6d6d6;">255</div>
<div style="left:1597px;top:347px;width:299px;height:21px;background:#2b2b2b;border-radius:3px;"></div>
<div style="left:1598px;top:348px;width:149px;height:20px;background:#464646;border-radius:3px;border:1px solid #4e4e4e;border-bottom:none;border-radius:4px 4px 0 0;"></div>
<div class="t" style="left:1598px;top:350px;height:16px;line-height:16px;font-size:12px;color:#d6d6d6;width:149px;text-align:center;">Swatches</div>
<div class="t" style="left:1747px;top:350px;height:16px;line-height:16px;font-size:12px;color:#c0c0c0;width:149px;text-align:center;">Generator</div>
<div style="left:1598px;top:372px;width:258px;height:17px;background:#585858;border-radius:3px;"></div>
<div style="left:1599px;top:373px;width:62px;height:15px;background:#2a2a2a;border-radius:2px;"></div>
<svg style="left:1606px;top:375px;" width="10" height="11" viewBox="0 0 10 11"><path d="M1 0.500V10.500M4 0.500V10.500M6.500 1L9.200 10.300" stroke="#2fd072" stroke-width="1.500"/></svg>
<div class="t" style="left:1621px;top:373px;height:16px;line-height:16px;font-size:12px;color:#d6d6d6;">Library</div>
<svg style="left:1671px;top:375px;" width="11" height="11" viewBox="0 0 11 11"><path d="M0.500 0.500H4L5 2H10.500V10.500H0.500Z" fill="#d0d0d0"/><path d="M2 5H9M2 7H9M2 9H9" stroke="#585858" stroke-width="0.900"/></svg>
<div class="t" style="left:1686px;top:373px;height:16px;line-height:16px;font-size:12px;color:#d6d6d6;">Project</div>
<svg style="left:1738px;top:374px;" width="9" height="12" viewBox="0 0 9 12"><path d="M0.600 0.600H5.500L8.400 3.500V11.400H0.600Z" fill="none" stroke="#d0d0d0" stroke-width="1.100"/></svg>
<div class="t" style="left:1752.2px;top:373px;height:16px;line-height:16px;font-size:12px;color:#d6d6d6;letter-spacing:-0.705px;">Scene</div>
<svg style="left:1801px;top:375px;" width="11" height="11" viewBox="0 0 11 11"><path d="M1.500 0.600H9.500Q10.400 0.600 10.400 1.500V6L6 10.400H1.500Q0.600 10.400 0.600 9.500V1.500Q0.600 0.600 1.500 0.600Z" fill="none" stroke="#d0d0d0" stroke-width="1.100"/></svg>
<div class="t" style="left:1816.4px;top:373px;height:16px;line-height:16px;font-size:12px;color:#d6d6d6;letter-spacing:-0.493px;">Labels</div>
<div style="left:1858px;top:372px;width:38px;height:17px;background:#585858;border-radius:3px;"></div>
<div style="left:1859px;top:373px;width:17px;height:15px;background:#2a2a2a;border-radius:2px;"></div>
<svg style="left:1863px;top:375.5px;" width="9" height="9" viewBox="0 0 9 9"><rect x="0" y="0" width="3.600" height="3.400" rx="0.800" fill="#2fd072"/><rect x="5.200" y="0" width="3.600" height="3.400" rx="0.800" fill="#2fd072"/><rect x="0" y="4.900" width="3.600" height="3.400" rx="0.800" fill="#2fd072"/><rect x="5.200" y="4.900" width="3.600" height="3.400" rx="0.800" fill="#2fd072"/></svg>
<svg style="left:1881px;top:376px;" width="11" height="9" viewBox="0 0 11 9"><path d="M0 0.500H11M0 4.500H11M0 8.500H11" stroke="#d0d0d0" stroke-width="1.200"/></svg>
<div style="left:1598px;top:392.5px;width:275px;height:16.5px;background:#4a4a4a;border-radius:3px;border:1px solid #363636;"></div>
<div style="left:1873px;top:392.5px;width:23px;height:16.5px;background:#4a4a4a;border-radius:3px;border:1px solid #363636;"></div>
<div class="t" style="left:1601px;top:394px;height:16px;line-height:16px;font-size:12px;color:#d6d6d6;">new</div>
<svg style="left:1860.5px;top:398px;" width="9" height="6" viewBox="0 0 9 6"><path d="M0.5 0.5L4.5 4.5L8.5 0.5" fill="none" stroke="#9a9a9a" stroke-width="1.2"/></svg>
<div style="left:1880px;top:400px;width:2px;height:2px;background:#d8d8d8;"></div>
<div style="left:1885px;top:400px;width:2px;height:2px;background:#d8d8d8;"></div>
<div style="left:1890px;top:400px;width:2px;height:2px;background:#d8d8d8;"></div>
<div style="left:1600px;top:412px;width:18px;height:18px;background:#8a4fff;border-radius:3px;"></div>
<div style="left:1622px;top:412px;width:18px;height:18px;background:#4da3ff;border-radius:3px;"></div>
<div style="left:1644px;top:412px;width:18px;height:18px;background:#ff7550;border-radius:3px;"></div>
<div style="left:1666px;top:412px;width:18px;height:18px;background:#50fab4;border-radius:3px;"></div>
<div style="left:1888px;top:410px;width:8px;height:73px;background:#3a3a3a;"></div>
<div style="left:1593px;top:490px;width:38px;height:22px;background:#464646;border-radius:3px 3px 0 0;"></div>
<div class="t" style="left:1598px;top:494px;height:16px;line-height:16px;font-size:12px;color:#d6d6d6;">Align</div>
<div style="left:1593px;top:512px;width:321px;height:68px;background:#464646;"></div>
<div class="t" style="left:1601px;top:524px;height:16px;line-height:16px;font-size:12px;color:#d6d6d6;">Alignment</div>
<div class="t" style="left:1601.2px;top:552px;height:16px;line-height:16px;font-size:12px;color:#d6d6d6;letter-spacing:0.257px;">Distribution</div>
<div style="left:1888px;top:522px;width:18px;height:18px;background:#2b2b2b;border-radius:3px;border:1px solid #222;"></div>
<svg style="left:1891px;top:525px;" width="12" height="12" viewBox="0 0 12 12"><path d="M0.500 11.500H11.500" stroke="#e0e0e0" stroke-width="1.200"/><rect x="2.500" y="5" width="2.500" height="5.500" fill="#e0e0e0"/><rect x="7" y="1" width="2.500" height="9.500" fill="#e0e0e0"/></svg>
<div style="left:494px;top:586px;width:89px;height:22px;background:#444444;border-radius:4px 4px 0 0;"></div>
<div class="t" style="left:499.8px;top:590px;height:16px;line-height:16px;font-size:12px;color:#d6d6d6;letter-spacing:-0.228px;">Scene Window</div>
<div style="left:584px;top:586px;width:100px;height:22px;background:#2c2c2c;border-radius:3px 3px 0 0;"></div>
<div class="t" style="left:589.6px;top:590px;height:16px;line-height:16px;font-size:12px;color:#d6d6d6;letter-spacing:-0.136px;">JavaScript Editor</div>
<div style="left:685px;top:586px;width:112px;height:22px;background:#2c2c2c;border-radius:3px 3px 0 0;"></div>
<div class="t" style="left:690.5px;top:590px;height:16px;line-height:16px;font-size:12px;color:#d6d6d6;letter-spacing:-0.192px;">Dependency Graph</div>
<div style="left:494px;top:608px;width:1420px;height:22px;background:#2b2b2b;"></div>
<div class="t" style="left:623px;top:612px;height:16px;line-height:16px;font-size:12px;color:#b4b4b4;width:200px;text-align:center;">Composition 1</div>
<svg style="left:951px;top:616px;" width="8" height="8" viewBox="0 0 8 8"><path d="M0.500 0.500L7.500 7.500M7.500 0.500L0.500 7.500" stroke="#9a9a9a" stroke-width="1"/></svg>
<div style="left:969px;top:613px;width:1px;height:12px;background:#8a8a8a;"></div>
<div class="t" style="left:1093px;top:612px;height:16px;line-height:16px;font-size:12px;color:#b4b4b4;width:200px;text-align:center;">Composition 2</div>
<svg style="left:1422px;top:616px;" width="8" height="8" viewBox="0 0 8 8"><path d="M0.500 0.500L7.500 7.500M7.500 0.500L0.500 7.500" stroke="#9a9a9a" stroke-width="1"/></svg>
<div style="left:1439px;top:609px;width:470px;height:21px;background:#444444;border-radius:3px 3px 0 0;"></div>
<div class="t" style="left:1624px;top:612px;height:16px;line-height:16px;font-size:12px;color:#d6d6d6;">Composition 3</div>
<svg style="left:1892px;top:616px;" width="8" height="8" viewBox="0 0 8 8"><path d="M0.500 0.500L7.500 7.500M7.500 0.500L0.500 7.500" stroke="#9a9a9a" stroke-width="1"/></svg>
<div style="left:494px;top:630px;width:490px;height:23px;background:#444444;"></div>
<div style="left:496px;top:632px;width:280px;height:20px;background:#232323;border-radius:10px;"></div>
<svg style="left:501px;top:635px;" width="14" height="14" viewBox="0 0 14 14"><circle cx="5.200" cy="5.500" r="4.400" fill="none" stroke="#cfcfcf" stroke-width="1"/><path d="M8.500 8.800L10 10.300" stroke="#cfcfcf" stroke-width="1"/><path d="M10 10.300L11.800 12.100" stroke="#cfcfcf" stroke-width="2" stroke-linecap="round"/></svg>
<div class="t" style="left:520.5px;top:635px;height:16px;line-height:16px;font-size:12px;color:#858585;letter-spacing:-0.288px;">Enter a layer name</div>
<div style="left:778px;top:632px;width:19px;height:19px;background:#2e2e2e;border-radius:3px;border:1px solid #242424;"></div>
<svg style="left:782px;top:636px;" width="11" height="11" viewBox="0 0 11 11"><path d="M5.500 0.500V10.500M0.500 5.500H10.500" stroke="#f0f0f0" stroke-width="2"/></svg>
<svg style="left:793px;top:647px;" width="3" height="3" viewBox="0 0 3 3"><path d="M3 0V3H0Z" fill="#6fcfae"/></svg>
<svg style="left:859px;top:647px;" width="3" height="3" viewBox="0 0 3 3"><path d="M3 0V3H0Z" fill="#6fcfae"/></svg>
<svg style="left:881px;top:647px;" width="3" height="3" viewBox="0 0 3 3"><path d="M3 0V3H0Z" fill="#6fcfae"/></svg>
<div style="left:822px;top:632px;width:19px;height:19px;background:#2e2e2e;border-radius:3px;border:1px solid #242424;"></div>
<div style="left:844px;top:632px;width:19px;height:19px;background:#2e2e2e;border-radius:3px;border:1px solid #242424;"></div>
<div style="left:866px;top:632px;width:19px;height:19px;background:#2e2e2e;border-radius:3px;border:1px solid #242424;"></div>
<svg style="left:825px;top:634px;" width="14" height="14" viewBox="0 0 14 14"><path d="M2.500 9A4 4 0 0 0 6 12.500M4 7A4 4 0 0 0 8 11M5.500 5.500A4 4 0 0 0 9.500 9.500" fill="none" stroke="#6a6a6a" stroke-width="1.200"/><circle cx="9.500" cy="4.500" r="3.600" fill="#d4d4d4"/></svg>
<svg style="left:847px;top:635px;" width="14" height="13" viewBox="0 0 14 13"><circle cx="2" cy="2" r="1.100" fill="#d8d8d8"/><circle cx="7" cy="2.500" r="1.100" fill="#d8d8d8"/><circle cx="11.500" cy="2" r="1.100" fill="#d8d8d8"/><circle cx="2.500" cy="7" r="1.100" fill="#d8d8d8"/><path d="M9 5V12M5.500 8.500H12.500" stroke="#d8d8d8" stroke-width="1.600"/></svg>
<svg style="left:869px;top:635px;" width="14" height="13" viewBox="0 0 14 13"><path d="M0 2H14M0 6.500H14M0 11H14" stroke="#d8d8d8" stroke-width="1" stroke-dasharray="4 2.500 7.500 0"/><circle cx="5.300" cy="2" r="1.500" fill="#2e2e2e" stroke="#d8d8d8"/><circle cx="8.700" cy="6.500" r="1.500" fill="#2e2e2e" stroke="#d8d8d8"/><circle cx="5.300" cy="11" r="1.500" fill="#2e2e2e" stroke="#d8d8d8"/></svg>
<div style="left:888px;top:632px;width:94px;height:20px;background:#2d2d2d;border-radius:2px;"></div>
<div class="t" style="left:892.5px;top:635px;height:16px;line-height:16px;font-size:12px;color:#5a5a5a;">F</div>
<div class="t" style="left:906px;top:635px;height:16px;line-height:16px;font-size:12px;color:#d6d6d6;">107</div>
<div style="left:494px;top:653px;width:490px;height:20px;background:#444444;"></div>
<svg style="left:500px;top:657px;" width="9" height="12" viewBox="0 0 9 12"><path d="M2 5V3.200Q2 0.600 4.500 0.600Q7 0.600 7 3.200V5" fill="none" stroke="#cfcfcf" stroke-width="1.200"/><rect x="0.500" y="5" width="8" height="6.500" rx="1" fill="#cfcfcf"/><rect x="4" y="7" width="1" height="2.500" fill="#444"/></svg>
<svg style="left:516px;top:659px;" width="14" height="9" viewBox="0 0 14 9"><path d="M0.500 4.500Q7 -3 13.500 4.500Q7 12 0.500 4.500Z" fill="none" stroke="#cfcfcf" stroke-width="1.100"/><circle cx="7" cy="4.500" r="2.300" fill="none" stroke="#cfcfcf" stroke-width="1.200"/></svg>
<svg style="left:536px;top:656px;" width="13" height="14" viewBox="0 0 13 14"><path d="M6.500 0.600L12.400 3.600V10.400L6.500 13.400L0.600 10.400V3.600Z M0.600 3.600L6.500 6.600L12.400 3.600M6.500 6.600V13.400" fill="none" stroke="#cfcfcf" stroke-width="1.100" stroke-linejoin="round"/></svg>
<svg style="left:555px;top:657px;" width="14" height="12" viewBox="0 0 14 12"><path d="M0.500 4H3L6.500 1V11L3 8H0.500Z" fill="#cfcfcf"/><path d="M8.500 3.500Q10 6 8.500 8.500M10.500 1.500Q13.500 6 10.500 10.500" fill="none" stroke="#cfcfcf" stroke-width="1.100"/></svg>
<svg style="left:575px;top:657px;" width="12" height="12" viewBox="0 0 12 12"><path d="M0.800 11.200L1.600 9.200L6.600 4.200L7.800 5.400L2.800 10.400Z" fill="none" stroke="#cfcfcf" stroke-width="0.900"/><path d="M5.600 3L9 6.400" stroke="#cfcfcf" stroke-width="1.700"/><path d="M7.800 4.200L9.900 2.100" stroke="#cfcfcf" stroke-width="3" stroke-linecap="round"/></svg>
<svg style="left:593px;top:659px;" width="15" height="9" viewBox="0 0 15 9"><path d="M0.3 4.500L3.500 0.500H13.500Q14.500 0.500 14.500 1.500V7.500Q14.500 8.500 13.500 8.500H3.500Z" fill="#cfcfcf"/><circle cx="4.600" cy="4.500" r="1.700" fill="#444"/></svg>
<div class="t" style="left:649px;top:656px;height:16px;line-height:16px;font-size:12px;color:#d6d6d6;">Name</div>
<div style="left:494px;top:673px;width:478px;height:132px;background:#353535;"></div>
<div style="left:494px;top:805px;width:478px;height:158px;background:#2a2a2a;"></div>
<div style="left:972px;top:673px;width:12px;height:290px;background:#2a2a2a;"></div>
<div style="left:972.5px;top:674px;width:9px;height:287px;background:#4b4b4b;border-radius:4.5px;"></div>
<div style="left:971px;top:962px;width:13px;height:14px;background:#2e2e2e;"></div>
<div style="left:496px;top:674px;width:18px;height:18px;background:#272727;border-radius:2px;"></div>
<div style="left:515px;top:674px;width:18px;height:18px;background:#272727;border-radius:2px;"></div>
<svg style="left:519px;top:678px;" width="11" height="11" viewBox="0 0 11 11"><path d="M9.800 4.800A4.700 4.700 0 1 1 7.500 1.300" fill="none" stroke="#cfcfcf" stroke-width="1.100"/><path d="M3.200 5.200L5.300 7.300L10 1.500" fill="none" stroke="#cfcfcf" stroke-width="1.200"/></svg>
<div style="left:573px;top:675px;width:16px;height:16px;background:#c5f07a;border-radius:2px;"></div>
<svg style="left:593px;top:679px;" width="15" height="9" viewBox="0 0 15 9"><path d="M0.3 4.500L3.500 0.500H13.500Q14.500 0.500 14.500 1.500V7.500Q14.500 8.500 13.500 8.500H3.500Z" fill="#cfcfcf"/><circle cx="4.600" cy="4.500" r="1.700" fill="#353535"/></svg>
<svg style="left:646px;top:679px;" width="18" height="10" viewBox="0 0 18 10"><path d="M0.600 4.500Q2.300 -3.200 4.400 4.500Q6.500 12.200 8.600 4.500Q10.700 -3.200 12.800 4.500Q14.900 12.200 17 4.500" fill="none" stroke="#8fd69a" stroke-width="1.100"/></svg>
<div class="t" style="left:667.4px;top:676px;height:16px;line-height:16px;font-size:12px;color:#d6d6d6;letter-spacing:-0.088px;">Oscillator [Position.Z] Cosine</div>
<div style="left:930px;top:675px;width:21px;height:16px;background:#2a2a2a;border-radius:3px;"></div>
<div style="left:940px;top:675px;width:1px;height:16px;background:#333;"></div>
<svg style="left:932px;top:679px;" width="7" height="7" viewBox="0 0 7 7"><path d="M6.500 0.500V6.500H3L0.300 3.500L3 0.500Z" fill="#d9b95c"/></svg>
<svg style="left:942px;top:679px;" width="7" height="7" viewBox="0 0 7 7"><path d="M0.500 0.500V6.500H4L6.700 3.500L4 0.500Z" fill="#7a7a7a"/></svg>
<svg style="left:956px;top:678px;" width="10" height="10" viewBox="0 0 10 10"><circle cx="5" cy="5" r="3.800" fill="none" stroke="#8a8a8a" stroke-width="1"/></svg>
<div style="left:496px;top:696px;width:18px;height:18px;background:#272727;border-radius:2px;"></div>
<div style="left:515px;top:696px;width:18px;height:18px;background:#272727;border-radius:2px;"></div>
<svg style="left:519px;top:700px;" width="11" height="11" viewBox="0 0 11 11"><path d="M9.800 4.800A4.700 4.700 0 1 1 7.500 1.300" fill="none" stroke="#cfcfcf" stroke-width="1.100"/><path d="M3.200 5.200L5.300 7.300L10 1.500" fill="none" stroke="#cfcfcf" stroke-width="1.200"/></svg>
<div style="left:573px;top:697px;width:16px;height:16px;background:#c5f07a;border-radius:2px;"></div>
<svg style="left:593px;top:701px;" width="15" height="9" viewBox="0 0 15 9"><path d="M0.3 4.500L3.500 0.500H13.500Q14.500 0.500 14.500 1.500V7.500Q14.500 8.500 13.500 8.500H3.500Z" fill="#cfcfcf"/><circle cx="4.600" cy="4.500" r="1.700" fill="#353535"/></svg>
<svg style="left:646px;top:701px;" width="18" height="10" viewBox="0 0 18 10"><path d="M0.600 4.500Q2.300 -3.200 4.400 4.500Q6.500 12.200 8.600 4.500Q10.700 -3.200 12.800 4.500Q14.900 12.200 17 4.500" fill="none" stroke="#8fd69a" stroke-width="1.100"/></svg>
<div class="t" style="left:667.4px;top:698px;height:16px;line-height:16px;font-size:12px;color:#d6d6d6;letter-spacing:-0.064px;">Oscillator [Position.X] Sine Driver</div>
<div style="left:930px;top:697px;width:21px;height:16px;background:#2a2a2a;border-radius:3px;"></div>
<div style="left:940px;top:697px;width:1px;height:16px;background:#333;"></div>
<svg style="left:932px;top:701px;" width="7" height="7" viewBox="0 0 7 7"><path d="M6.500 0.500V6.500H3L0.300 3.500L3 0.500Z" fill="#d9b95c"/></svg>
<svg style="left:942px;top:701px;" width="7" height="7" viewBox="0 0 7 7"><path d="M0.500 0.500V6.500H4L6.700 3.500L4 0.500Z" fill="#d264e8"/></svg>
<svg style="left:956px;top:700px;" width="10" height="10" viewBox="0 0 10 10"><circle cx="5" cy="5" r="3.800" fill="none" stroke="#8a8a8a" stroke-width="1"/></svg>
<div style="left:496px;top:718px;width:18px;height:18px;background:#272727;border-radius:2px;"></div>
<div style="left:515px;top:718px;width:18px;height:18px;background:#272727;border-radius:2px;"></div>
<svg style="left:519px;top:722px;" width="11" height="11" viewBox="0 0 11 11"><path d="M9.800 4.800A4.700 4.700 0 1 1 7.500 1.300" fill="none" stroke="#cfcfcf" stroke-width="1.100"/><path d="M3.200 5.200L5.300 7.300L10 1.500" fill="none" stroke="#cfcfcf" stroke-width="1.200"/></svg>
<div style="left:573px;top:719px;width:16px;height:16px;background:#6495ed;border-radius:2px;"></div>
<svg style="left:593px;top:723px;" width="15" height="9" viewBox="0 0 15 9"><path d="M0.3 4.500L3.500 0.500H13.500Q14.500 0.500 14.500 1.500V7.500Q14.500 8.500 13.500 8.500H3.500Z" fill="#cfcfcf"/><circle cx="4.600" cy="4.500" r="1.700" fill="#353535"/></svg>
<svg style="left:648px;top:720px;" width="15" height="15" viewBox="0 0 15 15"><rect x="0.800" y="3.900" width="10.300" height="10" fill="#a9c8f5"/><rect x="5" y="6.500" width="1.600" height="6.500" fill="#4a5a78"/><path d="M9 3.900H11.100V6Z" fill="#353535"/><path d="M12.500 0.500V3.500M11 2H14M9.500 1.500V3.500M8.500 2.500H10.500M13 4.500V6.500M12 5.500H14" stroke="#e8e8e8" stroke-width="0.900"/></svg>
<div class="t" style="left:667.4px;top:720px;height:16px;line-height:16px;font-size:12px;color:#d6d6d6;letter-spacing:-0.024px;">Index Context [Number]</div>
<div style="left:930px;top:719px;width:21px;height:16px;background:#2a2a2a;border-radius:3px;"></div>
<div style="left:940px;top:719px;width:1px;height:16px;background:#333;"></div>
<svg style="left:932px;top:723px;" width="7" height="7" viewBox="0 0 7 7"><path d="M6.500 0.500V6.500H3L0.300 3.500L3 0.500Z" fill="#7a7a7a"/></svg>
<svg style="left:942px;top:723px;" width="7" height="7" viewBox="0 0 7 7"><path d="M0.500 0.500V6.500H4L6.700 3.500L4 0.500Z" fill="#d264e8"/></svg>
<svg style="left:956px;top:722px;" width="10" height="10" viewBox="0 0 10 10"><circle cx="5" cy="5" r="3.800" fill="none" stroke="#8a8a8a" stroke-width="1"/></svg>
<div style="left:496px;top:740px;width:18px;height:18px;background:#272727;border-radius:2px;"></div>
<div style="left:515px;top:740px;width:18px;height:18px;background:#272727;border-radius:2px;"></div>
<svg style="left:519px;top:744px;" width="11" height="11" viewBox="0 0 11 11"><path d="M9.800 4.800A4.700 4.700 0 1 1 7.500 1.300" fill="none" stroke="#cfcfcf" stroke-width="1.100"/><path d="M3.200 5.200L5.300 7.300L10 1.500" fill="none" stroke="#cfcfcf" stroke-width="1.200"/></svg>
<div style="left:573px;top:741px;width:16px;height:16px;background:#6495ed;border-radius:2px;"></div>
<svg style="left:593px;top:745px;" width="15" height="9" viewBox="0 0 15 9"><path d="M0.3 4.500L3.500 0.500H13.500Q14.500 0.500 14.500 1.500V7.500Q14.500 8.500 13.500 8.500H3.500Z" fill="#cfcfcf"/><circle cx="4.600" cy="4.500" r="1.700" fill="#353535"/></svg>
<div class="t" style="left:646px;top:741px;height:10px;line-height:10px;font-size:8.5px;color:#a9c8f5;letter-spacing:0.300px;">abc</div>
<svg style="left:647px;top:751px;" width="15" height="4" viewBox="0 0 15 4"><path d="M0 0.500H14M0 3H14" stroke="#a9c8f5" stroke-width="1" stroke-dasharray="2.500 1"/></svg>
<div class="t" style="left:667.4px;top:742px;height:16px;line-height:16px;font-size:12px;color:#d6d6d6;letter-spacing:-0.051px;">String Generator [String]</div>
<div style="left:930px;top:741px;width:21px;height:16px;background:#2a2a2a;border-radius:3px;"></div>
<div style="left:940px;top:741px;width:1px;height:16px;background:#333;"></div>
<svg style="left:932px;top:745px;" width="7" height="7" viewBox="0 0 7 7"><path d="M6.500 0.500V6.500H3L0.300 3.500L3 0.500Z" fill="#d9b95c"/></svg>
<svg style="left:942px;top:745px;" width="7" height="7" viewBox="0 0 7 7"><path d="M0.500 0.500V6.500H4L6.700 3.500L4 0.500Z" fill="#d264e8"/></svg>
<svg style="left:956px;top:744px;" width="10" height="10" viewBox="0 0 10 10"><circle cx="5" cy="5" r="3.800" fill="none" stroke="#8a8a8a" stroke-width="1"/></svg>
<div style="left:496px;top:762px;width:18px;height:18px;background:#272727;border-radius:2px;"></div>
<div style="left:515px;top:762px;width:18px;height:18px;background:#272727;border-radius:2px;"></div>
<svg style="left:517px;top:768px;" width="14" height="9" viewBox="0 0 14 9"><path d="M0.500 4.500Q7 -3 13.500 4.500Q7 12 0.500 4.500Z" fill="none" stroke="#cfcfcf" stroke-width="1.100"/><circle cx="7" cy="4.500" r="2.300" fill="none" stroke="#cfcfcf" stroke-width="1.200"/></svg>
<div style="left:534px;top:762px;width:18px;height:18px;background:#272727;border-radius:2px;"></div>
<div style="left:573px;top:763px;width:16px;height:16px;background:#ffe680;border-radius:2px;"></div>
<svg style="left:593px;top:767px;" width="15" height="9" viewBox="0 0 15 9"><path d="M0.3 4.500L3.500 0.500H13.500Q14.500 0.500 14.500 1.500V7.500Q14.500 8.500 13.500 8.500H3.500Z" fill="#cfcfcf"/><circle cx="4.600" cy="4.500" r="1.700" fill="#353535"/></svg>
<svg style="left:648px;top:765px;" width="14" height="13" viewBox="0 0 14 13"><path d="M3.500 1.500H9.500M3.500 11.500H9.500M1.500 3.500V9.500M11.500 3.500V9.500" stroke="#e8d870" stroke-width="1"/><rect x="0.5" y="0.5" width="2" height="2" fill="#e0e0e0"/><rect x="0.5" y="10.5" width="2" height="2" fill="#e0e0e0"/><rect x="10.5" y="0.5" width="2" height="2" fill="#e0e0e0"/><rect x="10.5" y="10.5" width="2" height="2" fill="#e0e0e0"/></svg>
<div class="t" style="left:667.4px;top:764px;height:16px;line-height:16px;font-size:12px;color:#d6d6d6;letter-spacing:-0.452px;">Ellipse Shape</div>
<svg style="left:956px;top:766px;" width="10" height="10" viewBox="0 0 10 10"><circle cx="5" cy="5" r="3.800" fill="none" stroke="#8a8a8a" stroke-width="1"/></svg>
<div style="left:496px;top:784px;width:18px;height:18px;background:#272727;border-radius:2px;"></div>
<div style="left:515px;top:784px;width:18px;height:18px;background:#272727;border-radius:2px;"></div>
<svg style="left:517px;top:790px;" width="14" height="9" viewBox="0 0 14 9"><path d="M0.500 4.500Q7 -3 13.500 4.500Q7 12 0.500 4.500Z" fill="none" stroke="#cfcfcf" stroke-width="1.100"/><circle cx="7" cy="4.500" r="2.300" fill="none" stroke="#cfcfcf" stroke-width="1.200"/></svg>
<div style="left:534px;top:784px;width:18px;height:18px;background:#272727;border-radius:2px;"></div>
<div style="left:573px;top:785px;width:16px;height:16px;background:#bb8fff;border-radius:2px;"></div>
<svg style="left:593px;top:789px;" width="15" height="9" viewBox="0 0 15 9"><path d="M0.3 4.500L3.500 0.500H13.500Q14.500 0.500 14.500 1.500V7.500Q14.500 8.500 13.500 8.500H3.500Z" fill="#cfcfcf"/><circle cx="4.600" cy="4.500" r="1.700" fill="#353535"/></svg>
<svg style="left:666px;top:786px;" width="16" height="16" viewBox="0 0 16 16"><path d="M3 1.500H13M3 14.500H13M1.500 3V13M14.500 3V13" stroke="#e4e4e4" stroke-width="1"/><rect x="0.5" y="0.5" width="2" height="2" fill="#e8e8e8"/><rect x="0.5" y="13.5" width="2" height="2" fill="#e8e8e8"/><rect x="13.5" y="0.5" width="2" height="2" fill="#e8e8e8"/><rect x="13.5" y="13.5" width="2" height="2" fill="#e8e8e8"/></svg>
<div class="t" style="left:666px;top:786px;height:16px;line-height:16px;font-size:11.5px;color:#e8d870;width:16px;text-align:center;font-weight:bold;">T</div>
<div class="t" style="left:686.5px;top:786px;height:16px;line-height:16px;font-size:12px;color:#d6d6d6;letter-spacing:-0.182px;">Cavalry</div>
<div style="left:930px;top:785px;width:21px;height:16px;background:#2a2a2a;border-radius:3px;"></div>
<div style="left:940px;top:785px;width:1px;height:16px;background:#333;"></div>
<svg style="left:932px;top:789px;" width="7" height="7" viewBox="0 0 7 7"><path d="M6.500 0.500V6.500H3L0.300 3.500L3 0.500Z" fill="#d9b95c"/></svg>
<svg style="left:942px;top:789px;" width="7" height="7" viewBox="0 0 7 7"><path d="M0.500 0.500V6.500H4L6.700 3.500L4 0.500Z" fill="#7a7a7a"/></svg>
<svg style="left:956px;top:788px;" width="10" height="10" viewBox="0 0 10 10"><circle cx="5" cy="5" r="3.800" fill="none" stroke="#8a8a8a" stroke-width="1"/></svg>
<div style="left:611px;top:763px;width:14px;height:18px;background:#2b2b2b;border-radius:2px;"></div>
<svg style="left:614px;top:770px;" width="9" height="6" viewBox="0 0 9 6"><path d="M0.5 0.5L4.5 4.5L8.5 0.5" fill="none" stroke="#8a8a8a" stroke-width="1.2"/></svg>
<div style="left:626px;top:763px;width:16px;height:18px;background:#2b2b2b;border-radius:2px;"></div>
<div style="left:494px;top:963px;width:490px;height:13px;background:#2a2a2a;"></div>
<div style="left:494px;top:964px;width:476px;height:10px;background:#4b4b4b;border-radius:5px;"></div>
<div style="left:494px;top:976px;width:490px;height:22px;background:#444444;"></div>
<div style="left:497px;top:978px;width:20px;height:18.5px;background:#363636;border-radius:3px;border:1px solid #242424;"></div>
<svg style="left:499.5px;top:982.5px;" width="15" height="9" viewBox="0 0 15 9"><path d="M0.3 4.500L3.500 0.500H13.500Q14.500 0.500 14.500 1.500V7.500Q14.500 8.500 13.500 8.500H3.500Z" fill="#d8d8d8"/><circle cx="4.600" cy="4.500" r="1.700" fill="#363636"/></svg>
<div style="left:775px;top:978px;width:19px;height:18px;background:#2e2e2e;border-radius:3px;border:1px solid #242424;"></div>
<svg style="left:779px;top:981px;" width="11" height="11" viewBox="0 0 11 11"><rect x="0.600" y="0.600" width="9.800" height="9.800" fill="none" stroke="#d8d8d8" stroke-width="1.200"/><rect x="4" y="4" width="3" height="3" fill="#d8d8d8"/></svg>
<div style="left:799px;top:978px;width:183px;height:18px;background:#5a5a5a;border-radius:3px;"></div>
<div style="left:800px;top:979px;width:85px;height:16px;background:#262626;border-radius:2px;"></div>
<svg style="left:805px;top:982px;" width="11" height="10" viewBox="0 0 11 10"><path d="M0 1H11M2 5H9M0 9H11" stroke="#2fd072" stroke-width="1.800"/></svg>
<div class="t" style="left:821px;top:980px;height:16px;line-height:16px;font-size:12px;color:#d6d6d6;">Time Editor</div>
<svg style="left:893px;top:981px;" width="12" height="12" viewBox="0 0 12 12"><path d="M1.500 0V10.500H12" fill="none" stroke="#cfcfcf" stroke-width="1.100"/><path d="M1.500 10.500L5.500 5.500L11 3" fill="none" stroke="#cfcfcf" stroke-width="1.100"/></svg>
<div class="t" style="left:910px;top:980px;height:16px;line-height:16px;font-size:12px;color:#d6d6d6;">Graph Editor</div>
<div style="left:986px;top:809px;width:2px;height:1px;background:#8a8a8a;"></div>
<div style="left:986px;top:812px;width:2px;height:1px;background:#8a8a8a;"></div>
<div style="left:986px;top:815px;width:2px;height:1px;background:#8a8a8a;"></div>
<div style="left:986px;top:818px;width:2px;height:1px;background:#8a8a8a;"></div>
<div style="left:986px;top:821px;width:2px;height:1px;background:#8a8a8a;"></div>
<div style="left:984px;top:630px;width:7px;height:368px;background:#282828;"></div>
<div style="left:991px;top:630px;width:923px;height:333px;background:#2a2a2a;"></div>
<div class="t" style="left:979px;top:631px;height:16px;line-height:16px;font-size:12px;color:#d6d6d6;width:40px;text-align:center;">0</div>
<div class="t" style="left:1033px;top:631px;height:16px;line-height:16px;font-size:12px;color:#d6d6d6;width:40px;text-align:center;">15</div>
<div class="t" style="left:1088px;top:631px;height:16px;line-height:16px;font-size:12px;color:#d6d6d6;width:40px;text-align:center;">30</div>
<div class="t" style="left:1142px;top:631px;height:16px;line-height:16px;font-size:12px;color:#d6d6d6;width:40px;text-align:center;">45</div>
<div class="t" style="left:1196px;top:631px;height:16px;line-height:16px;font-size:12px;color:#d6d6d6;width:40px;text-align:center;">60</div>
<div class="t" style="left:1251px;top:631px;height:16px;line-height:16px;font-size:12px;color:#d6d6d6;width:40px;text-align:center;">75</div>
<div class="t" style="left:1305px;top:631px;height:16px;line-height:16px;font-size:12px;color:#d6d6d6;width:40px;text-align:center;">90</div>
<div class="t" style="left:1359px;top:631px;height:16px;line-height:16px;font-size:12px;color:#d6d6d6;width:40px;text-align:center;">105</div>
<div class="t" style="left:1413px;top:631px;height:16px;line-height:16px;font-size:12px;color:#d6d6d6;width:40px;text-align:center;">120</div>
<div class="t" style="left:1468px;top:631px;height:16px;line-height:16px;font-size:12px;color:#d6d6d6;width:40px;text-align:center;">135</div>
<div class="t" style="left:1522px;top:631px;height:16px;line-height:16px;font-size:12px;color:#d6d6d6;width:40px;text-align:center;">150</div>
<div class="t" style="left:1576px;top:631px;height:16px;line-height:16px;font-size:12px;color:#d6d6d6;width:40px;text-align:center;">165</div>
<div class="t" style="left:1631px;top:631px;height:16px;line-height:16px;font-size:12px;color:#d6d6d6;width:40px;text-align:center;">180</div>
<svg style="left:991px;top:630px;" width="923" height="24" viewBox="0 0 923 24"><path d="M9.00 16V24M63.31 16V24M117.62 16V24M171.94 16V24M226.25 16V24M280.56 16V24M334.87 16V24M389.18 16V24M443.50 16V24M497.81 16V24M552.12 16V24M606.43 16V24M660.74 16V24M715.06 16V24M769.37 16V24M823.68 16V24M877.99 16V24" stroke="#a8a8a8" stroke-width="1.200" fill="none"/><path d="M19.86 20V24M30.72 20V24M41.59 20V24M52.45 20V24M74.17 20V24M85.04 20V24M95.90 20V24M106.76 20V24M128.49 20V24M139.35 20V24M150.21 20V24M161.07 20V24M182.80 20V24M193.66 20V24M204.52 20V24M215.39 20V24M237.11 20V24M247.97 20V24M258.84 20V24M269.70 20V24M291.42 20V24M302.28 20V24M313.15 20V24M324.01 20V24M345.73 20V24M356.60 20V24M367.46 20V24M378.32 20V24M400.05 20V24M410.91 20V24M421.77 20V24M432.63 20V24M454.36 20V24M465.22 20V24M476.08 20V24M486.95 20V24M508.67 20V24M519.53 20V24M530.40 20V24M541.26 20V24M562.98 20V24M573.84 20V24M584.71 20V24M595.57 20V24M617.29 20V24M628.16 20V24M639.02 20V24M649.88 20V24M671.61 20V24M682.47 20V24M693.33 20V24M704.19 20V24M725.92 20V24M736.78 20V24M747.64 20V24M758.51 20V24M780.23 20V24M791.09 20V24M801.96 20V24M812.82 20V24M834.54 20V24M845.40 20V24M856.27 20V24M867.13 20V24M888.85 20V24M899.72 20V24M910.58 20V24M921.44 20V24" stroke="#8c8c8c" stroke-width="1.200" fill="none"/></svg>
<div style="left:1000px;top:655px;width:906px;height:15px;background:#444444;"></div>
<div style="left:995px;top:653px;width:5px;height:18px;background:#6fc8b0;border-radius:1px;"></div>
<div style="left:1905px;top:653px;width:5px;height:18px;background:#6fc8b0;border-radius:1px;"></div>
<div style="left:991px;top:673px;width:923px;height:21px;background:#303030;"></div>
<div style="left:1000px;top:674px;width:905px;height:18px;background:#c8f27c;border-radius:2px;background:repeating-linear-gradient(135deg,#e2fd94 -1.26px,#e2fd94 -0.56px,#cff587 0.24px,#c3ea7c 11.47px,#e2fd94 11.47px,#e2fd94 12.17px,#bbdf78 12.97px,#b2d670 24.20px);"></div>
<div class="t" style="left:1008.4px;top:675px;height:16px;line-height:16px;font-size:12px;color:#1e1e1e;letter-spacing:-0.078px;-webkit-text-stroke:0.200px #1e1e1e;">Oscillator [Position.Z] Cosine</div>
<div style="left:1000px;top:696px;width:905px;height:18px;background:#c8f27c;border-radius:2px;background:repeating-linear-gradient(135deg,#e2fd94 -1.26px,#e2fd94 -0.56px,#cff587 0.24px,#c3ea7c 11.47px,#e2fd94 11.47px,#e2fd94 12.17px,#bbdf78 12.97px,#b2d670 24.20px);"></div>
<div class="t" style="left:1008.4px;top:697px;height:16px;line-height:16px;font-size:12px;color:#1e1e1e;letter-spacing:-0.055px;-webkit-text-stroke:0.200px #1e1e1e;">Oscillator [Position.X] Sine Driver</div>
<div style="left:1000px;top:718px;width:905px;height:18px;background:#6b9bf0;border-radius:2px;background:repeating-linear-gradient(135deg,#82b2ff -1.26px,#82b2ff -0.56px,#6f9ef3 0.24px,#6793ea 11.47px,#82b2ff 11.47px,#82b2ff 12.17px,#6089df 12.97px,#5a82d4 24.20px);"></div>
<div class="t" style="left:1008.4px;top:719px;height:16px;line-height:16px;font-size:12px;color:#ffffff;letter-spacing:-0.010px;-webkit-text-stroke:0.350px #fff;">Index Context [Number]</div>
<div style="left:1000px;top:740px;width:905px;height:18px;background:#6b9bf0;border-radius:2px;background:repeating-linear-gradient(135deg,#82b2ff -1.26px,#82b2ff -0.56px,#6f9ef3 0.24px,#6793ea 11.47px,#82b2ff 11.47px,#82b2ff 12.17px,#6089df 12.97px,#5a82d4 24.20px);"></div>
<div class="t" style="left:1008.4px;top:741px;height:16px;line-height:16px;font-size:12px;color:#ffffff;letter-spacing:-0.039px;-webkit-text-stroke:0.350px #fff;">String Generator [String]</div>
<div style="left:1000px;top:762px;width:905px;height:18px;background:#ffe680;border-radius:2px;"></div>
<div class="t" style="left:1008.4px;top:763px;height:16px;line-height:16px;font-size:12px;color:#1e1e1e;letter-spacing:-0.429px;-webkit-text-stroke:0.200px #1e1e1e;">Ellipse Shape</div>
<div style="left:1000px;top:784px;width:905px;height:18px;background:#bb8fff;border-radius:2px;"></div>
<div class="t" style="left:1008.4px;top:785px;height:16px;line-height:16px;font-size:12px;color:#ffffff;letter-spacing:-0.139px;-webkit-text-stroke:0.350px #fff;">Cavalry</div>
<div style="left:1387px;top:650px;width:1px;height:312px;background:#6fc8b0;"></div>
<svg style="left:1381px;top:645px;" width="13" height="7" viewBox="0 0 13 7"><path d="M0 0H13L6.500 7Z" fill="#6fc8b0"/></svg>
<div style="left:991px;top:964px;width:921px;height:10px;background:#4b4b4b;border-radius:5px;"></div>
<div style="left:991px;top:976px;width:923px;height:22px;background:#444444;"></div>
<div style="left:994.5px;top:978px;width:17.5px;height:18px;background:#2b2b2b;border-radius:4px;border:1px solid #222;"></div>
<svg style="left:996px;top:980px;" width="15" height="14" viewBox="0 0 15 14"><path d="M0.200 2H14M4.300 7H14M0.200 12H5" stroke="#e4e4e4" stroke-width="1.500"/><path d="M0.500 7H1.800M7 12H9" stroke="#e4e4e4" stroke-width="1.500"/><path d="M15 10.500V14.500H11Z" fill="#6fcfae"/></svg>
<div style="left:1015px;top:979.5px;width:150px;height:15.5px;background:#2d2d2d;border-radius:3px;"></div>
<div class="t" style="left:1017.7px;top:980px;height:16px;line-height:16px;font-size:12px;color:#d6d6d6;letter-spacing:-0.130px;">Default Keyframe Layer</div>
<div style="left:1171px;top:979.5px;width:70px;height:15.5px;background:#2d2d2d;border-radius:3px;"></div>
<div class="t" style="left:1177px;top:980px;height:16px;line-height:16px;font-size:12px;color:#5a5a5a;">F</div>
<div class="t" style="left:1188px;top:980px;height:16px;line-height:16px;font-size:12px;color:#d6d6d6;">-</div>
<div class="t" style="left:1247px;top:980px;height:16px;line-height:16px;font-size:12px;color:#d6d6d6;">Align:</div>
<div style="left:1284px;top:978.5px;width:52px;height:17px;background:#2a2a2a;border-radius:4px;border:1px solid #202020;"></div>
<div style="left:1301px;top:979.5px;width:1px;height:15px;background:#444;"></div>
<div style="left:1319px;top:979.5px;width:1px;height:15px;background:#444;"></div>
<svg style="left:1285px;top:979px;" width="16" height="16" viewBox="0 0 16 16"><path d="M1.500 0.500V15" stroke="#e8e8e8" stroke-width="1.100"/><path d="M7 5H10M7 11H14.200" stroke="#e8e8e8" stroke-width="1.700"/><rect x="4" y="4" width="2" height="2" fill="#6fcfae"/><rect x="4" y="10" width="2" height="2" fill="#6fcfae"/></svg>
<svg style="left:1302px;top:979px;" width="17" height="16" viewBox="0 0 17 16"><path d="M8.500 0.500V15" stroke="#e8e8e8" stroke-width="1.100"/><path d="M4.700 5H6.500M10.500 5H12.500M3 11H6.500M10.500 11H14" stroke="#e8e8e8" stroke-width="1.700"/><rect x="7.500" y="4" width="2" height="2" fill="#6fcfae"/><rect x="7.500" y="10" width="2" height="2" fill="#6fcfae"/></svg>
<svg style="left:1320px;top:979px;" width="16" height="16" viewBox="0 0 16 16"><path d="M13.750 0.500V15" stroke="#e8e8e8" stroke-width="1.100"/><path d="M5.400 5H8M1.250 11H8" stroke="#e8e8e8" stroke-width="1.700"/><rect x="9" y="4" width="2" height="2" fill="#6fcfae"/><rect x="9" y="10" width="2" height="2" fill="#6fcfae"/></svg>
<div style="left:1340.5px;top:978.5px;width:17px;height:17px;background:#2a2a2a;border-radius:4px;border:1px solid #202020;"></div>
<svg style="left:1342.5px;top:981px;" width="13" height="12" viewBox="0 0 13 12"><rect x="1.200" y="1.200" width="10.600" height="9.800" fill="none" stroke="#cfcfcf" stroke-width="1" stroke-dasharray="6 2.300" stroke-dashoffset="-2.200"/><rect x="0" y="0" width="2.400" height="2.400" fill="#9a9a9a"/><rect x="10.600" y="0" width="2.400" height="2.400" fill="#9a9a9a"/><rect x="0" y="9.800" width="2.400" height="2.400" fill="#9a9a9a"/><rect x="10.600" y="9.800" width="2.400" height="2.400" fill="#9a9a9a"/><rect x="5.700" y="5.300" width="1.600" height="1.600" fill="#e8e8e8"/></svg>
<div style="left:1361.5px;top:977px;width:30.5px;height:19px;background:#2b2b2b;border-radius:4px;border:1px solid #202020;"></div>
<div style="left:1362.5px;top:978px;width:17px;height:17px;background:#404040;border-radius:3px;"></div>
<div style="left:1379.5px;top:978px;width:1px;height:17px;background:#484848;"></div>
<svg style="left:1364px;top:979.5px;" width="14" height="14" viewBox="0 0 14 14"><path d="M6.950 12.500L3.150 9.150A3.800 3.800 0 0 1 8.150 3.450L11.950 6.800" fill="none" stroke="#d8d8d8" stroke-width="2.400"/><path d="M5.700 11.400L6.950 12.500M10.700 5.700L11.950 6.800" fill="none" stroke="#9a9a9a" stroke-width="2.400"/></svg>
<svg style="left:1383px;top:982px;" width="6" height="9" viewBox="0 0 6 9"><path d="M0.500 0.500L5.500 4.500L0.500 8.500Z" fill="none" stroke="#8e8e8e" stroke-width="1"/></svg>
<div style="left:1396.5px;top:977px;width:30.5px;height:19px;background:#2b2b2b;border-radius:4px;border:1px solid #202020;"></div>
<div style="left:1397.5px;top:978px;width:17px;height:17px;background:#404040;border-radius:3px;"></div>
<div style="left:1415px;top:978px;width:1px;height:17px;background:#484848;"></div>
<svg style="left:1398px;top:980px;" width="16" height="15" viewBox="0 0 16 15"><path d="M0.900 7.600H3.500M11.300 7.600H15" stroke="#e4e4e4" stroke-width="1.100"/><path d="M5.500 1V14M9.200 5V10.500" stroke="#e4e4e4" stroke-width="1.100"/></svg>
<svg style="left:1419px;top:982px;" width="6" height="9" viewBox="0 0 6 9"><path d="M0.500 0.500L5.500 4.500L0.500 8.500Z" fill="none" stroke="#8e8e8e" stroke-width="1"/></svg>
<svg style="left:1743px;top:980px;" width="14" height="14" viewBox="0 0 14 14"><circle cx="5.800" cy="5.800" r="5" fill="none" stroke="#d0d0d0" stroke-width="1.100"/><path d="M3.300 5.800H8.300M9.500 9.500L13 13" stroke="#d0d0d0" stroke-width="1.200"/></svg>
<div style="left:1767px;top:985px;width:115px;height:3px;background:#3a3a3a;border-radius:2px;"></div>
<div style="left:1762px;top:982px;width:10px;height:10px;background:#5fb89c;border-radius:5px;border:2px solid #86d4bc;"></div>
<svg style="left:1887px;top:980px;" width="14" height="14" viewBox="0 0 14 14"><circle cx="5.800" cy="5.800" r="5" fill="none" stroke="#d0d0d0" stroke-width="1.100"/><path d="M3.300 5.800H8.300M5.800 3.300V8.300M9.500 9.500L13 13" stroke="#d0d0d0" stroke-width="1.200"/></svg>
<div style="left:494px;top:1004px;width:1420px;height:22px;background:#3c3c3c;"></div>
<div style="left:0px;top:1026px;width:1920px;height:3px;background:#2b2b2b;"></div>
<div style="left:498px;top:1010px;width:2px;height:2px;background:#8a8a8a;"></div>
<div style="left:498px;top:1014px;width:2px;height:2px;background:#8a8a8a;"></div>
<div style="left:498px;top:1018px;width:2px;height:2px;background:#8a8a8a;"></div>
<div style="left:507px;top:1006.5px;width:17px;height:17px;background:#2b2b2b;border-radius:4px;border:1px solid #222;"></div>
<svg style="left:509.5px;top:1008.5px;" width="12" height="13" viewBox="0 0 12 13"><path d="M0 0H12V8.500H11V12L7.500 8.500H0Z" fill="#ececec"/><path d="M2 2.300H3.300M4.500 2.300H10M2 4.300H3.300M4.500 4.300H10M2 6.300H3.300M4.500 6.300H10" stroke="#2b2b2b" stroke-width="1"/><path d="M15 10.500V14.500H11Z" fill="#6fcfae"/></svg>
<div style="left:528px;top:1008px;width:18px;height:14px;background:#2fd072;border-radius:3px;"></div>
<div class="t" style="left:528px;top:1007px;height:16px;line-height:16px;font-size:11px;color:#0e5036;width:18px;text-align:center;">0</div>
<div style="left:554px;top:1012px;width:6px;height:6px;background:#2fd072;border-radius:3px;"></div>
<div class="t" style="left:565.1px;top:1007px;height:16px;line-height:16px;font-size:12px;color:#d6d6d6;letter-spacing:-0.223px;">Saved Palette to:</div>
<div style="left:1610px;top:1006px;width:80px;height:18px;background:#d9b95c;border-radius:2px;"></div>
<div class="t" style="left:1615.5px;top:1008px;height:16px;line-height:16px;font-size:12px;color:#1e1e1e;letter-spacing:-0.400px;">Feedback</div>
<svg style="left:1672px;top:1009px;" width="13" height="13" viewBox="0 0 13 13"><path d="M1 0.500H9L12 3.500V12.500H1Z" fill="#f4f4f4"/><path d="M3 4H8M3 6.500H10M3 9H7" stroke="#9a9a9a" stroke-width="0.900"/><path d="M6 11L12 4.500L13.500 6L7.500 12.500L5.500 13Z" fill="#e8703a"/></svg>
<div style="left:1693px;top:1006px;width:109px;height:18px;background:#2fca6d;border-radius:2px;"></div>
<div class="t" style="left:1698.7px;top:1008px;height:16px;line-height:16px;font-size:12px;color:#15331f;letter-spacing:-0.192px;">Upgrade to Pro</div>
<svg style="left:1782px;top:1009px;" width="14" height="12" viewBox="0 0 14 12"><path d="M1 11Q-0.500 5 3 1.500L5.500 3Q6 8 5.500 11Z" fill="#f2c93c"/><path d="M13 11Q14.500 5 11 1.500L8.500 3Q8 8 8.500 11Z" fill="#f2c93c"/></svg>
<div style="left:1805px;top:1006px;width:106px;height:18px;background:#3aa0f0;border-radius:2px;"></div>
<div class="t" style="left:1810px;top:1008px;height:16px;line-height:16px;font-size:12px;color:#10283c;letter-spacing:-0.269px;">Tips and Tricks</div>
<svg style="left:1893px;top:1009px;" width="13" height="13" viewBox="0 0 13 13"><path d="M12.500 0.500Q7 0.500 4 5.500L7.500 9Q12.500 6 12.500 0.500Z" fill="#e8e8f0"/><circle cx="9" cy="4" r="1.300" fill="#3a78c8"/><path d="M4 5.500L1 6.500L3 8M7.500 9L6.500 12L5 10" fill="#d94040"/><path d="M3.500 9.500L1 12" stroke="#f2a03c" stroke-width="1.500"/></svg>
<svg style="left:167px;top:58px;" width="13" height="12" viewBox="0 0 13 12"><rect x="1.500" y="1.500" width="6.500" height="6" fill="#2fd072"/><rect x="5" y="5.500" width="6.500" height="5" fill="#2fd072"/><rect x="0" y="0" width="2" height="2" fill="#2fd072"/><rect x="0" y="10" width="2" height="2" fill="#2fd072"/><rect x="11" y="0" width="2" height="2" fill="#2fd072"/><rect x="11" y="10" width="2" height="2" fill="#2fd072"/></svg>
<svg style="left:229px;top:58px;" width="13" height="12" viewBox="0 0 13 12"><rect x="3.300" y="3.300" width="6" height="5.500" fill="#d8d8d8"/><rect x="0" y="0" width="2" height="2" fill="#e8e8e8"/><rect x="0" y="10" width="2" height="2" fill="#e8e8e8"/><rect x="10.5" y="0" width="2" height="2" fill="#e8e8e8"/><rect x="10.5" y="10" width="2" height="2" fill="#e8e8e8"/></svg>
<svg style="left:980px;top:56px;" width="14" height="14" viewBox="0 0 14 14"><circle cx="2" cy="2" r="1.100" fill="#e0e0e0"/><circle cx="8.500" cy="2.500" r="1.100" fill="#e0e0e0"/><circle cx="2" cy="8.500" r="1.100" fill="#e0e0e0"/><path d="M8 5.500Q8.300 9 11.500 9.500Q8.300 10 8 13.500Q7.700 10 4.500 9.500Q7.700 9 8 5.500Z" fill="#e8e8e8" stroke="#e8e8e8" stroke-width="0.800"/><path d="M13.500 11V13.500H11Z" fill="#6fcfae"/></svg>
<svg style="left:1089px;top:57px;" width="8" height="13" viewBox="0 0 8 13"><path d="M5.500 0L0.500 7.500H3.500L2.500 13L7.500 5.500H4.500Z" fill="#6fcfae"/></svg>
<svg style="left:1372px;top:51px;" width="27" height="26" viewBox="0 0 27 26"><circle cx="6.4" cy="5.4" r="1.500" fill="#e8d870"/><circle cx="6.4" cy="12.9" r="1.500" fill="#e8d870"/><circle cx="6.4" cy="20.4" r="1.500" fill="#e8d870"/><circle cx="13.9" cy="5.4" r="1.500" fill="#e8d870"/><circle cx="13.9" cy="12.9" r="1.500" fill="#e8d870"/><circle cx="13.9" cy="20.4" r="1.500" fill="#e8d870"/><circle cx="21.5" cy="5.4" r="1.500" fill="#e8d870"/><circle cx="21.5" cy="12.9" r="1.500" fill="#e8d870"/><circle cx="21.5" cy="20.4" r="1.500" fill="#e8d870"/></svg>
<svg style="left:1403px;top:51px;" width="27" height="26" viewBox="0 0 27 26"><rect x="4" y="8.600" width="13.400" height="13.400" fill="#e8d870"/><path d="M4 8.600L8.600 4.200H22L17.400 8.600Z" fill="#f6f6f6"/><path d="M17.400 8.600L22 4.200V17.600L17.400 22Z" fill="#c4c4c4"/></svg>
<svg style="left:1433px;top:51px;" width="27" height="26" viewBox="0 0 27 26"><rect x="3.500" y="3.300" width="20" height="19.400" rx="5.500" fill="none" stroke="#f0f0f0" stroke-width="1.100"/></svg>
<div class="t" style="left:1433px;top:55px;height:20px;line-height:20px;font-size:17px;color:#e8d870;width:27px;text-align:center;font-weight:bold;">F</div>
<svg style="left:1463px;top:51px;" width="27" height="26" viewBox="0 0 27 26"><circle cx="6.300" cy="6.400" r="1.500" fill="#e8d870"/><circle cx="17.500" cy="5.400" r="1.500" fill="#d8d8d8"/><circle cx="11.700" cy="9.300" r="1.500" fill="#c0c0c0"/><circle cx="20.900" cy="13.400" r="2.600" fill="#e8d870"/><circle cx="12.400" cy="16.300" r="2.800" fill="#c8c8c8"/><circle cx="5.300" cy="17.300" r="1.600" fill="#e8d870"/><circle cx="18.400" cy="21.300" r="1.600" fill="#e8d870"/></svg>
<svg style="left:1497px;top:51px;" width="27" height="26" viewBox="0 0 27 26"><path d="M3.500 13H7M9 13H13M15 13H23" stroke="#a0dca0" stroke-width="1.600"/><path d="M16.700 6.800L23.500 13L16.700 19.200" fill="none" stroke="#a0dca0" stroke-width="1.800"/></svg>
<svg style="left:1527px;top:51px;" width="27" height="26" viewBox="0 0 27 26"><path d="M5.500 3V22.500" stroke="#f0f0f0" stroke-width="1.100"/><rect x="9" y="7" width="8.700" height="4.500" fill="#a0dca0"/><rect x="9" y="14" width="14" height="4.800" fill="#a0dca0"/></svg>
<svg style="left:1562px;top:51px;" width="27" height="26" viewBox="0 0 27 26"><path d="M14 5V21M6 13H22" stroke="#484848" stroke-width="4"/><circle cx="14" cy="13" r="2" fill="#a0d0ff"/><circle cx="14" cy="5" r="2" fill="#a0d0ff"/><circle cx="14" cy="21" r="2" fill="#a0d0ff"/><circle cx="6" cy="13" r="2" fill="#a0d0ff"/><circle cx="22" cy="13" r="2" fill="#a0d0ff"/></svg>
<svg style="left:1592px;top:51px;" width="27" height="26" viewBox="0 0 27 26"><path d="M4.500 13H23.500" stroke="#484848" stroke-width="4"/><circle cx="6" cy="13" r="2" fill="#a0d0ff"/><circle cx="14" cy="13" r="2" fill="#a0d0ff"/><circle cx="22" cy="13" r="2" fill="#a0d0ff"/></svg>
<svg style="left:1622px;top:51px;" width="27" height="26" viewBox="0 0 27 26"><path d="M18.500 5.500Q9.500 6.500 9.500 13Q9.500 19.500 18.500 20.500" fill="none" stroke="#e4e4e4" stroke-width="1.800"/><path d="M16 6H21M18.500 3.500V8.500M16 20H21M18.500 17.500V22.500" stroke="#a0dca0" stroke-width="1.300"/></svg>
<svg style="left:1652px;top:51px;" width="27" height="26" viewBox="0 0 27 26"><path d="M3 8.100H24.800M3 17.300H24.800" stroke="#f0f0f0" stroke-width="1.100"/><rect x="3.700" y="10" width="4" height="5.900" fill="#e8d870"/><rect x="10" y="10" width="8.500" height="5.900" fill="#e8d870"/><rect x="20.500" y="10" width="4" height="5.900" fill="#e8d870"/></svg>
<svg style="left:1687px;top:51px;" width="27" height="26" viewBox="0 0 27 26"><path d="M5 9.200L18 4.800" stroke="#e8d870" stroke-width="3.200"/><path d="M11.500 7L15 18" stroke="#e8d870" stroke-width="3.200"/><path d="M5 19.500Q9 23.500 14 20.500Q20 17.500 24.500 22.400" fill="none" stroke="#f0f0f0" stroke-width="1"/></svg>
<svg style="left:1722px;top:51px;" width="27" height="26" viewBox="0 0 27 26"><rect x="4" y="4.300" width="20" height="1.800" fill="#a0d0ff"/><rect x="4" y="8" width="4" height="3.800" fill="#e4e4e4"/><rect x="9" y="13" width="9" height="4" fill="#e4e4e4"/><rect x="19" y="18" width="5" height="3.700" fill="#e4e4e4"/></svg>
<svg style="left:1752px;top:51px;" width="27" height="26" viewBox="0 0 27 26"><rect x="4" y="4.300" width="20" height="1.800" fill="#a0d0ff"/><rect x="4" y="8" width="12" height="3.800" fill="#e4e4e4"/><rect x="8.300" y="13" width="11.700" height="4" fill="#e4e4e4"/><rect x="13" y="18" width="11" height="3.700" fill="#e4e4e4"/></svg>
<svg style="left:1787px;top:51px;" width="27" height="26" viewBox="0 0 27 26"><rect x="3.500" y="5.500" width="21" height="15" fill="none" stroke="#f0f0f0" stroke-width="1.100"/><rect x="5.8" y="7.900" width="4.300" height="10.100" fill="#e8d870"/><rect x="12" y="7.900" width="4.300" height="10.100" fill="#e8d870"/><rect x="18.2" y="7.900" width="4.300" height="10.100" fill="#e8d870"/></svg>
<svg style="left:1817px;top:51px;" width="27" height="26" viewBox="0 0 27 26"><rect x="3.500" y="5.500" width="21" height="15" fill="none" stroke="#f0f0f0" stroke-width="1.100"/><rect x="6" y="7.900" width="16" height="3.900" fill="#e8d870"/><rect x="6" y="14" width="16" height="4" fill="#e8d870"/></svg>
<svg style="left:1847px;top:51px;" width="27" height="26" viewBox="0 0 27 26"><rect x="3.500" y="5.500" width="21" height="15" fill="none" stroke="#f0f0f0" stroke-width="1.100"/><rect x="6" y="7.9" width="7" height="4" fill="#e8d870"/><rect x="6" y="14" width="7" height="4" fill="#e8d870"/><rect x="15" y="7.9" width="7" height="4" fill="#e8d870"/><rect x="15" y="14" width="7" height="4" fill="#e8d870"/></svg>
<svg style="left:1882px;top:51px;" width="27" height="26" viewBox="0 0 27 26"><rect x="4.200" y="7.900" width="13.700" height="10.900" rx="1.200" fill="#e4e4e4"/><path d="M18.600 13.400L24 8.500V18.500Z" fill="#e4e4e4"/><rect x="6" y="5.300" width="7.500" height="1.500" fill="#e4e4e4"/><circle cx="7.200" cy="11" r="1.100" fill="#2e2e2e"/></svg>
<div style="left:1691px;top:410px;width:204px;height:239px;background:rgba(0,0,0,0.35);border-radius:2px;filter:blur(3px);"></div>
<div style="left:1688px;top:405px;width:200px;height:239px;background:#262626;"></div>
<div style="left:1688px;top:574px;width:200px;height:23px;background:#626262;"></div>
<div class="t" style="left:1711.2px;top:409px;height:16px;line-height:16px;font-size:12px;color:#dadada;letter-spacing:-0.207px;">New Palette...</div>
<div class="t" style="left:1711.2px;top:434px;height:16px;line-height:16px;font-size:12px;color:#dadada;letter-spacing:-0.079px;">Import...</div>
<div class="t" style="left:1711.2px;top:457px;height:16px;line-height:16px;font-size:12px;color:#dadada;letter-spacing:-0.693px;">Save As...</div>
<div class="t" style="left:1711.2px;top:482px;height:16px;line-height:16px;font-size:12px;color:#dadada;letter-spacing:-0.350px;">Rename Palette...</div>
<div class="t" style="left:1711.2px;top:505px;height:16px;line-height:16px;font-size:12px;color:#dadada;letter-spacing:-0.290px;">Reveal in Explorer...</div>
<div class="t" style="left:1711.2px;top:530px;height:16px;line-height:16px;font-size:12px;color:#7d7d7d;letter-spacing:-0.112px;">Add Colors from Selection</div>
<div class="t" style="left:1711.2px;top:555px;height:16px;line-height:16px;font-size:12px;color:#dadada;letter-spacing:-0.152px;">Set Gradient From Palette</div>
<div class="t" style="left:1711.2px;top:578px;height:16px;line-height:16px;font-size:12px;color:#dadada;letter-spacing:-0.071px;">Create Array From Palette</div>
<div class="t" style="left:1711.2px;top:603px;height:16px;line-height:16px;font-size:12px;color:#dadada;letter-spacing:-0.105px;">Clear Palette</div>
<div class="t" style="left:1711.2px;top:626px;height:16px;line-height:16px;font-size:12px;color:#dadada;letter-spacing:-0.049px;">Delete Palette</div>
<div style="left:1688px;top:429px;width:200px;height:1px;background:#505050;"></div>
<div style="left:1688px;top:477px;width:200px;height:1px;background:#505050;"></div>
<div style="left:1688px;top:525px;width:200px;height:1px;background:#505050;"></div>
<div style="left:1688px;top:550px;width:200px;height:1px;background:#505050;"></div>
<div style="left:1688px;top:599px;width:200px;height:1px;background:#505050;"></div>
<svg style="left:1691px;top:412px;" width="11" height="11" viewBox="0 0 11 11"><path d="M2.500 0V5M0 2.500H5" stroke="#dadada" stroke-width="1.100"/><rect x="6.600" y="0.600" width="3.800" height="3.800" fill="none" stroke="#dadada" stroke-width="1.200"/><rect x="0.600" y="6.600" width="3.800" height="3.800" fill="none" stroke="#dadada" stroke-width="1.200"/><rect x="6.600" y="6.600" width="3.800" height="3.800" fill="none" stroke="#dadada" stroke-width="1.200"/></svg>
<svg style="left:1691px;top:436px;" width="11" height="12" viewBox="0 0 11 12"><path d="M5.500 0V7M2.500 4.500L5.500 7.500L8.500 4.500" fill="none" stroke="#dadada" stroke-width="1.600"/><path d="M0.600 8.500V11.400H10.400V8.500" fill="none" stroke="#dadada" stroke-width="1.200"/></svg>
<svg style="left:1691px;top:459px;" width="11" height="12" viewBox="0 0 11 12"><path d="M5.500 8V1M2.500 3.500L5.500 0.500L8.500 3.500" fill="none" stroke="#dadada" stroke-width="1.600"/><path d="M0.600 8.500V11.400H10.400V8.500" fill="none" stroke="#dadada" stroke-width="1.200"/></svg>
<svg style="left:1691px;top:484px;" width="12" height="11" viewBox="0 0 12 11"><path d="M0.500 9.500L9 1" stroke="#dadada" stroke-width="1.800"/><path d="M4 10.500H12" stroke="#dadada" stroke-width="1.100"/></svg>
<svg style="left:1691px;top:507px;" width="12" height="11" viewBox="0 0 12 11"><path d="M5 1.500H0.600V10.400H10V6.500" fill="none" stroke="#dadada" stroke-width="1.200"/><path d="M4.500 6.500L10.500 0.800M7 0.600H11V4.500" fill="none" stroke="#dadada" stroke-width="1.200"/></svg>
<svg style="left:1691px;top:532px;" width="12" height="12" viewBox="0 0 12 12"><path d="M0.500 3.500V0.500H3.500M8.500 0.500H11.500V3.500M11.500 8.500V11.500H8.500M3.500 11.500H0.500V8.500" fill="none" stroke="#6a6a6a" stroke-width="1.100"/><path d="M2 0V4M0 2H4" stroke="#6a6a6a" stroke-width="1"/></svg>
<svg style="left:1691px;top:560px;" width="12" height="5" viewBox="0 0 12 5"><path d="M0.500 0V5M3.500 0V5M5.500 0V5M7.500 0V5M11.500 0V5" stroke="#dadada" stroke-width="1"/><path d="M4 2.500H8" stroke="#dadada" stroke-width="3"/></svg>
<svg style="left:1691px;top:581px;" width="11" height="10" viewBox="0 0 11 10"><path d="M0 1H2M0 5H2M0 9H2" stroke="#dadada" stroke-width="1.200" stroke-dasharray="1 1"/><path d="M4 1H11M4 5H11M4 9H11" stroke="#dadada" stroke-width="1.200"/></svg>
<svg style="left:1690px;top:606px;" width="15" height="11" viewBox="0 0 15 11"><path d="M0.3 5.5L4.5 0.5H14.5V10.5H4.5Z" fill="#dadada"/><path d="M6.8 3L11.8 8M11.8 3L6.8 8" stroke="#262626" stroke-width="1.5"/></svg>
<svg style="left:1691px;top:628px;" width="12" height="13" viewBox="0 0 12 13"><path d="M0.5 2.5H11.5M4 2V0.7H8V2" stroke="#dadada" stroke-width="1.4" fill="none"/><path d="M1.5 4H10.5L9.8 12.5H2.2Z" fill="#dadada"/><path d="M4.3 5.5V11M6 5.5V11M7.7 5.5V11" stroke="#2e2e2e" stroke-width="0.9"/></svg>
<div style="left:1865px;top:388px;width:45px;height:32px;border:3px solid #b4e61c;"></div>
<div style="left:1688px;top:567px;width:203.5px;height:37px;border:3px solid #b4e61c;"></div>
</div>
</body></html>
